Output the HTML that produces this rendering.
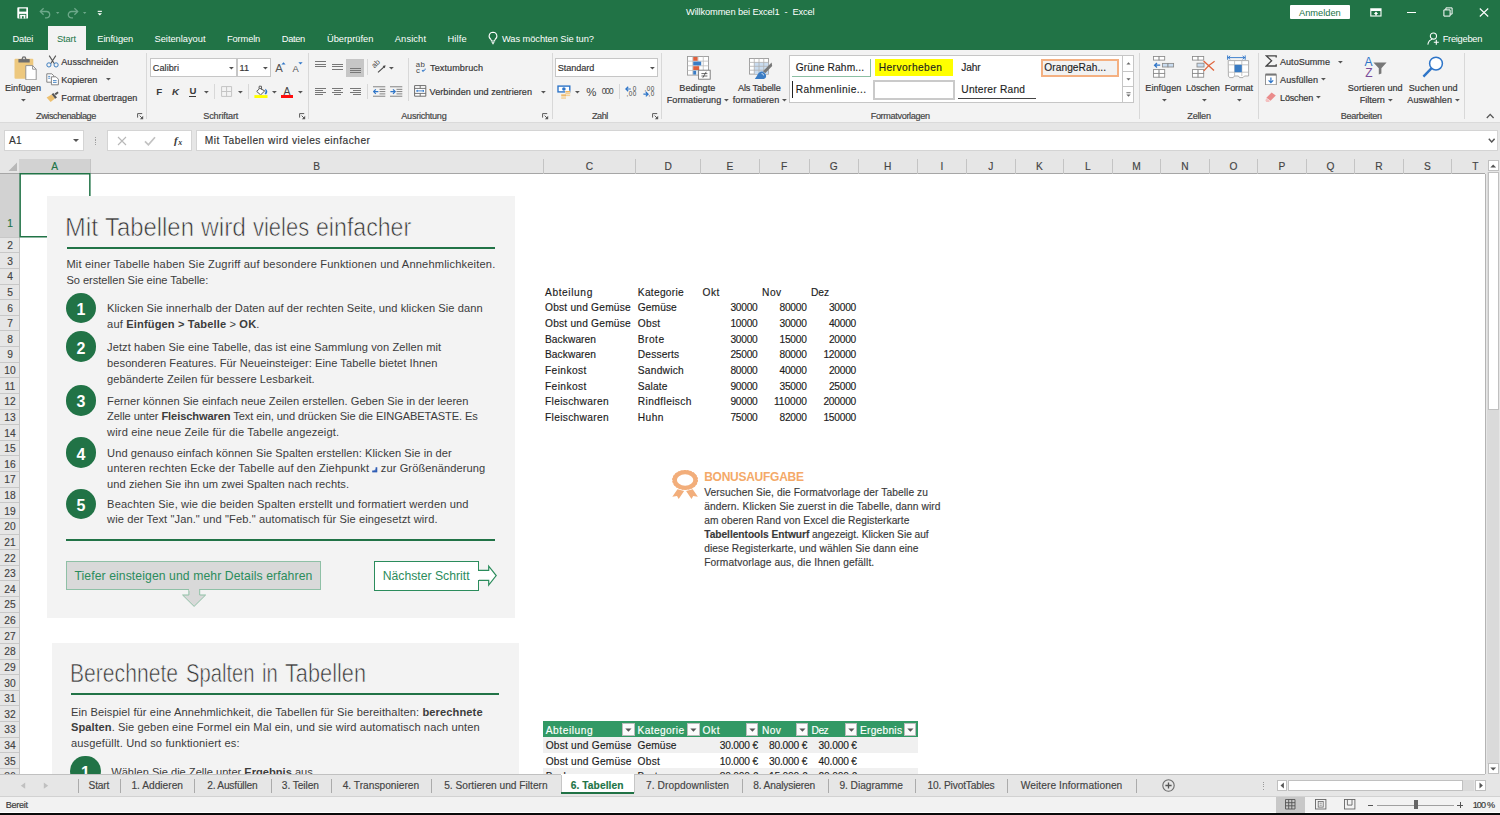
<!DOCTYPE html>
<html lang="de"><head><meta charset="utf-8"><title>Willkommen bei Excel1 - Excel</title>
<style>html,body{margin:0;padding:0}body{width:1500px;height:815px;position:relative;overflow:hidden;background:#fff;font-family:"Liberation Sans", sans-serif;}.b{position:absolute;display:block}.t{position:absolute;white-space:nowrap;line-height:1}</style></head>
<body>
<div class="b" style="left:0px;top:0px;width:1500px;height:50px;background:#217346;"></div>
<svg class="b" style="left:16.8px;top:7.3px;" width="11.6" height="11.8" viewBox="0 0 11.6 11.8"><rect x=".3" y=".3" width="11" height="11.200" rx=".8" fill="#fff"/><rect x="2.300" y="1.500" width="7" height="3.100" fill="#217346"/><rect x="2.300" y="6.900" width="7" height="4.600" fill="#217346"/><rect x="3.300" y="7.900" width="1.600" height="3.600" fill="#fff"/><rect x="6.700" y="7.900" width="1.600" height="3.600" fill="#fff"/><rect x="3.300" y="7.900" width="5" height="1.300" fill="#fff"/></svg>
<svg class="b" style="left:39px;top:7px;" width="13" height="12" viewBox="0 0 13 12"><path d="M1.5 4.5h6a3.2 3.2 0 0 1 0 6.4h-1.5" fill="none" stroke="#6da88a" stroke-width="1.3"/><path d="M4.6 1.2l-3.3 3.3 3.3 3.3" fill="none" stroke="#6da88a" stroke-width="1.3"/></svg>
<svg class="b" style="left:55px;top:10.8px;" width="5.4" height="4" viewBox="0 0 5.4 4"><path d="M1 1h3.4l-1.7 2z" fill="#6da88a"/></svg>
<svg class="b" style="left:66px;top:7px;" width="13" height="12" viewBox="0 0 13 12"><path d="M11.5 4.5h-6a3.2 3.2 0 0 0 0 6.4h1.5" fill="none" stroke="#6da88a" stroke-width="1.3"/><path d="M8.4 1.2l3.3 3.3-3.3 3.3" fill="none" stroke="#6da88a" stroke-width="1.3"/></svg>
<svg class="b" style="left:82.3px;top:10.8px;" width="5.4" height="4" viewBox="0 0 5.4 4"><path d="M1 1h3.4l-1.7 2z" fill="#6da88a"/></svg>
<svg class="b" style="left:97px;top:10px;" width="6" height="7" viewBox="0 0 6 7"><rect x=".7" y=".8" width="4.2" height="1.1" fill="#fff"/><path d="M.6 3.2h4.4l-2.2 2.4z" fill="#fff"/></svg>
<span class="t" style="left:686.00px;top:8.00px;font-size:9.3px;color:#fff;letter-spacing:-0.119px;">Willkommen bei Excel1 &nbsp;- &nbsp;Excel</span>
<div class="b" style="left:1290.4px;top:4.8px;width:59.6px;height:14.7px;background:#fff;border-radius:1px;"></div>
<span class="t" style="left:1299.00px;top:9.00px;font-size:9.3px;color:#217346;letter-spacing:-0.011px;">Anmelden</span>
<svg class="b" style="left:1369.5px;top:7.8px;" width="12" height="9" viewBox="0 0 12 9"><rect x=".8" y=".8" width="10.2" height="7.2" fill="none" stroke="#fff" stroke-width="1.1"/><rect x="1" y="1" width="10" height="2" fill="#fff"/><path d="M6 3.6l2.2 2.4h-1.4v1.6h-1.6v-1.6h-1.4z" fill="#fff"/></svg>
<div class="b" style="left:1407px;top:11.6px;width:8.6px;height:1px;background:#fff;"></div>
<svg class="b" style="left:1442.5px;top:7.2px;" width="10" height="10" viewBox="0 0 10 10"><path d="M.9 2.9h6.2v6.2h-6.2z" fill="none" stroke="#fff" stroke-width="1"/><path d="M2.9 2.9v-2h6.2v6.2h-2" fill="none" stroke="#fff" stroke-width="1"/></svg>
<svg class="b" style="left:1478.5px;top:7.8px;" width="10" height="9" viewBox="0 0 10 9"><path d="M.8 .5l8.4 8M9.2 .5l-8.4 8" stroke="#fff" stroke-width="1.1" fill="none"/></svg>
<div class="b" style="left:47.7px;top:26.3px;width:38.5px;height:24px;background:#f3f3f3;"></div>
<span class="t" style="left:12.50px;top:35.00px;font-size:9.3px;color:#fff;letter-spacing:-0.230px;">Datei</span>
<span class="t" style="left:56.90px;top:35.00px;font-size:9.3px;color:#217346;letter-spacing:-0.110px;">Start</span>
<span class="t" style="left:97.30px;top:35.00px;font-size:9.3px;color:#fff;letter-spacing:-0.115px;">Einfügen</span>
<span class="t" style="left:154.50px;top:35.00px;font-size:9.3px;color:#fff;letter-spacing:-0.016px;">Seitenlayout</span>
<span class="t" style="left:227.00px;top:35.00px;font-size:9.3px;color:#fff;letter-spacing:-0.135px;">Formeln</span>
<span class="t" style="left:281.80px;top:35.00px;font-size:9.3px;color:#fff;letter-spacing:-0.328px;">Daten</span>
<span class="t" style="left:327.00px;top:35.00px;font-size:9.3px;color:#fff;letter-spacing:-0.024px;">Überprüfen</span>
<span class="t" style="left:394.80px;top:35.00px;font-size:9.3px;color:#fff;letter-spacing:0.117px;">Ansicht</span>
<span class="t" style="left:447.50px;top:35.00px;font-size:9.3px;color:#fff;letter-spacing:0.148px;">Hilfe</span>
<span class="t" style="left:502.00px;top:35.00px;font-size:9.3px;color:#fff;letter-spacing:-0.062px;">Was möchten Sie tun?</span>
<span class="t" style="left:1442.70px;top:35.00px;font-size:9.3px;color:#fff;letter-spacing:-0.272px;">Freigeben</span>
<svg class="b" style="left:487px;top:31px;" width="12" height="14" viewBox="0 0 12 14"><path d="M6 1.2a3.9 3.9 0 0 0-2.2 7.1c.5.5.6 1 .6 1.7h3.2c0-.7.1-1.2.6-1.7a3.9 3.9 0 0 0-2.200-7.1z" fill="none" stroke="#fff" stroke-width="1.05"/><path d="M4.6 11.4h2.800M5 12.700h2" stroke="#fff" stroke-width=".9"/></svg>
<svg class="b" style="left:1426.5px;top:31.5px;" width="13" height="14" viewBox="0 0 13 14"><circle cx="6.4" cy="4" r="3.1" fill="none" stroke="#fff" stroke-width="1.05"/><path d="M.8 12.600c.6-3.200 2.500-4.900 4.600-5.300" fill="none" stroke="#fff" stroke-width="1.05"/><path d="M9.300 7.800v5M6.800 10.300h5" stroke="#fff" stroke-width="1.1"/></svg>
<div class="b" style="left:0px;top:50px;width:1500px;height:72px;background:#f3f3f3;"></div>
<div class="b" style="left:0px;top:122px;width:1500px;height:36.5px;background:#e6e6e6;"></div>
<div class="b" style="left:0px;top:121.6px;width:1500px;height:1px;background:#dadada;"></div>
<svg class="b" style="left:13.5px;top:55.5px;" width="23.5" height="24.5" viewBox="0 0 23.5 24.5"><rect x=".5" y="2.800" width="18.800" height="19.900" rx="1" fill="#edc87e"/><rect x="4.400" y="3" width="11.300" height="3.500" rx=".6" fill="#6e6e6e"/><circle cx="10" cy="2.500" r="2.300" fill="#6e6e6e"/><circle cx="10" cy="2.300" r=".9" fill="#f3f3f3"/><path d="M11.800 9.600h6.800l3.600 3.600v10.600h-10.400z" fill="#fff" stroke="#8a8a8a" stroke-width=".9"/><path d="M18.600 9.600v3.600h3.600" fill="none" stroke="#8a8a8a" stroke-width=".9"/></svg>
<span class="t" style="left:5.00px;top:84.00px;font-size:9.1px;color:#363636;letter-spacing:0.013px;-webkit-text-stroke:0.18px #363636;">Einfügen</span>
<svg class="b" style="left:20.2px;top:98.4px;" width="6.8" height="4.5" viewBox="0 0 6.8 4.5"><path d="M1 1h4.8l-2.4 2.5z" fill="#555"/></svg>
<svg class="b" style="left:46px;top:55px;" width="13" height="12.5" viewBox="0 0 13 12.5"><path d="M3.200 .6l5.200 8.200M9.800 .6l-5.200 8.200" stroke="#555" stroke-width="1.1" fill="none"/><circle cx="2.900" cy="9.900" r="2.100" fill="none" stroke="#3d7ebf" stroke-width="1"/><circle cx="10.100" cy="9.900" r="2.100" fill="none" stroke="#3d7ebf" stroke-width="1"/></svg>
<span class="t" style="left:61.30px;top:58.00px;font-size:9.1px;color:#363636;letter-spacing:-0.004px;-webkit-text-stroke:0.18px #363636;">Ausschneiden</span>
<svg class="b" style="left:45.5px;top:73px;" width="13.5" height="12.5" viewBox="0 0 13.5 12.5"><path d="M.8 .8h5l2 2v6.400h-7z" fill="#fff" stroke="#777" stroke-width=".9"/><path d="M5.400 3.800h4.600l2.400 2.400v5.600h-7z" fill="#fff" stroke="#777" stroke-width=".9"/><path d="M2.200 3.400h2M2.200 5.200h2" stroke="#3d7ebf" stroke-width=".9"/><path d="M7 7.600h3.600M7 9.400h3.600" stroke="#3d7ebf" stroke-width=".9"/></svg>
<span class="t" style="left:61.30px;top:76.00px;font-size:9.1px;color:#363636;letter-spacing:-0.058px;-webkit-text-stroke:0.18px #363636;">Kopieren</span>
<svg class="b" style="left:104.6px;top:77px;" width="6.8" height="4.5" viewBox="0 0 6.8 4.5"><path d="M1 1h4.8l-2.4 2.5z" fill="#555"/></svg>
<svg class="b" style="left:46px;top:91px;" width="13.5" height="11.5" viewBox="0 0 13.5 11.5"><path d="M.6 6.400l5-3 3.400 4.200-4.400 3.400z" fill="#edc070"/><path d="M5.600 3.200l1.800-1.200 3.600 4.600-1.800 1.200z" fill="#555"/><path d="M8.600 2.600l3-2 1 1.400-2.800 2.200z" fill="#555"/></svg>
<span class="t" style="left:61.30px;top:94.00px;font-size:9.1px;color:#363636;letter-spacing:0.043px;-webkit-text-stroke:0.18px #363636;">Format übertragen</span>
<span class="t" style="left:36.00px;top:112.00px;font-size:9.1px;color:#444;letter-spacing:-0.417px;-webkit-text-stroke:0.18px #444;">Zwischenablage</span>
<svg class="b" style="left:137.0px;top:113.2px;" width="7" height="6.5" viewBox="0 0 7 6.5"><path d="M.6 4.600V.6H5.200" fill="none" stroke="#5a5a5a" stroke-width="1"/><path d="M2.600 2.600l2.600 2.600" fill="none" stroke="#5a5a5a" stroke-width="1"/><path d="M6.200 2.800v3.400h-3.400z" fill="#5a5a5a"/></svg>
<div class="b" style="left:146.1px;top:53.3px;width:1px;height:65.4px;background:#d8d8d8;"></div>
<div class="b" style="left:150.4px;top:58.4px;width:86.3px;height:18.4px;background:#fff;border:1px solid #c6c6c6;box-sizing:border-box;"></div>
<span class="t" style="left:152.80px;top:64.00px;font-size:9.1px;color:#363636;letter-spacing:0.070px;-webkit-text-stroke:0.18px #363636;">Calibri</span>
<svg class="b" style="left:228.2px;top:65.5px;" width="6.8" height="4.5" viewBox="0 0 6.8 4.5"><path d="M1 1h4.8l-2.4 2.5z" fill="#505050"/></svg>
<div class="b" style="left:236.8px;top:58.4px;width:33.8px;height:18.4px;background:#fff;border:1px solid #c6c6c6;box-sizing:border-box;"></div>
<span class="t" style="left:239.60px;top:64.00px;font-size:9.1px;color:#363636;letter-spacing:-0.053px;-webkit-text-stroke:0.18px #363636;">11</span>
<svg class="b" style="left:261.8px;top:65.5px;" width="6.8" height="4.5" viewBox="0 0 6.8 4.5"><path d="M1 1h4.8l-2.4 2.5z" fill="#505050"/></svg>
<span class="t" style="left:275.20px;top:63.00px;font-size:11.3px;color:#555;">A</span>
<svg class="b" style="left:280.8px;top:61.6px;" width="5" height="3" viewBox="0 0 5 3"><path d="M.4 2.600l2.100-2.300 2.100 2.300z" fill="#2e75c8"/></svg>
<span class="t" style="left:292.60px;top:64.00px;font-size:9.4px;color:#555;">A</span>
<svg class="b" style="left:298.4px;top:61.8px;" width="5" height="3" viewBox="0 0 5 3"><path d="M.4 .3h4.200l-2.100 2.300z" fill="#2e75c8"/></svg>
<span class="t" style="left:156.20px;top:87.00px;font-size:9.8px;color:#3a3a3a;font-weight:bold;">F</span>
<span class="t" style="left:172.00px;top:87.00px;font-size:9.8px;color:#3a3a3a;font-weight:bold;font-style:italic;">K</span>
<span class="t" style="left:189.60px;top:86.00px;font-size:9.6px;color:#3a3a3a;font-weight:bold;">U</span>
<div class="b" style="left:189.4px;top:95.8px;width:6.8px;height:0.9px;background:#3a3a3a;"></div>
<svg class="b" style="left:203.2px;top:89.8px;" width="6.8" height="4.5" viewBox="0 0 6.8 4.5"><path d="M1 1h4.8l-2.4 2.5z" fill="#555"/></svg>
<div class="b" style="left:214.2px;top:84px;width:1px;height:15.3px;background:#d8d8d8;"></div>
<svg class="b" style="left:221px;top:86px;" width="11.5" height="11" viewBox="0 0 11.5 11"><path d="M.6 .6h10v9.800h-10zM5.600 .6v9.800M.6 5.500h10" fill="none" stroke="#c4c4c4" stroke-width="1"/></svg>
<svg class="b" style="left:237.2px;top:89.8px;" width="6.8" height="4.5" viewBox="0 0 6.8 4.5"><path d="M1 1h4.8l-2.4 2.5z" fill="#555"/></svg>
<div class="b" style="left:248.2px;top:84px;width:1px;height:15.3px;background:#d8d8d8;"></div>
<svg class="b" style="left:253.5px;top:84.5px;" width="14" height="13.5" viewBox="0 0 14 13.5"><path d="M2.700 6.400l3.200-3.100 4.800 2.600-4.100 4z" fill="#fff" stroke="#555" stroke-width="1"/><path d="M4.900 3.600l.4-2.500 2.200.2.100 3.300" fill="none" stroke="#555" stroke-width=".95"/><path d="M11 3.800c2.400 1.200 3.200 3.400 1 5.600l-1.400-.6c1.200-1.600 1.200-3 .4-5z" fill="#2e75c8"/><rect x=".4" y="10.100" width="13.100" height="3.200" fill="#ffff00"/></svg>
<svg class="b" style="left:270.5px;top:89.8px;" width="6.8" height="4.5" viewBox="0 0 6.8 4.5"><path d="M1 1h4.8l-2.4 2.5z" fill="#555"/></svg>
<span class="t" style="left:283.40px;top:87.00px;font-size:10.4px;color:#444;">A</span>
<div class="b" style="left:280.9px;top:94.6px;width:12.4px;height:3.2px;background:#ff0d0d;"></div>
<svg class="b" style="left:297.2px;top:89.8px;" width="6.8" height="4.5" viewBox="0 0 6.8 4.5"><path d="M1 1h4.8l-2.4 2.5z" fill="#555"/></svg>
<span class="t" style="left:203.30px;top:112.00px;font-size:9.1px;color:#444;letter-spacing:-0.143px;-webkit-text-stroke:0.18px #444;">Schriftart</span>
<svg class="b" style="left:299.0px;top:113.2px;" width="7" height="6.5" viewBox="0 0 7 6.5"><path d="M.6 4.600V.6H5.200" fill="none" stroke="#5a5a5a" stroke-width="1"/><path d="M2.600 2.600l2.600 2.600" fill="none" stroke="#5a5a5a" stroke-width="1"/><path d="M6.200 2.800v3.400h-3.400z" fill="#5a5a5a"/></svg>
<div class="b" style="left:308.2px;top:53.3px;width:1px;height:65.4px;background:#d8d8d8;"></div>
<div class="b" style="left:315px;top:61.3px;width:11px;height:1px;background:#777;"></div>
<div class="b" style="left:315px;top:63.6px;width:11px;height:1px;background:#777;"></div>
<div class="b" style="left:315px;top:65.9px;width:11px;height:1px;background:#777;"></div>
<div class="b" style="left:332.3px;top:64.0px;width:11px;height:1px;background:#777;"></div>
<div class="b" style="left:332.3px;top:66.3px;width:11px;height:1px;background:#777;"></div>
<div class="b" style="left:332.3px;top:68.6px;width:11px;height:1px;background:#777;"></div>
<div class="b" style="left:346.4px;top:58.7px;width:17.3px;height:18px;background:#c6c6c6;"></div>
<div class="b" style="left:349.6px;top:67.8px;width:11px;height:1px;background:#777;"></div>
<div class="b" style="left:349.6px;top:70.1px;width:11px;height:1px;background:#777;"></div>
<div class="b" style="left:349.6px;top:72.4px;width:11px;height:1px;background:#777;"></div>
<div class="b" style="left:366.8px;top:59.3px;width:1px;height:16.0px;background:#d8d8d8;"></div>
<svg class="b" style="left:372px;top:60px;" width="14.5" height="13.5" viewBox="0 0 14.5 13.5"><text x="0" y="0" font-size="7.600" font-family="Liberation Sans, sans-serif" fill="#444" transform="translate(2.400 8.600) rotate(-45)">ab</text><path d="M6 12.400l6.600-6" stroke="#444" stroke-width="1.100" fill="none"/><path d="M13.600 5.200l-3 .7 2.200 2.300z" fill="#444"/></svg>
<svg class="b" style="left:387.9px;top:65.5px;" width="6.8" height="4.5" viewBox="0 0 6.8 4.5"><path d="M1 1h4.8l-2.4 2.5z" fill="#555"/></svg>
<div class="b" style="left:408.2px;top:58px;width:1px;height:42.7px;background:#d8d8d8;"></div>
<svg class="b" style="left:415px;top:60px;" width="12" height="14" viewBox="0 0 12 14"><text x=".7" y="6.700" font-size="7.800" font-family="Liberation Sans, sans-serif" fill="#444" textLength="9.200">ab</text><text x=".9" y="12.800" font-size="7.800" font-family="Liberation Sans, sans-serif" fill="#444">c</text><path d="M10.200 8.600c0 1.600-.8 2.200-2.400 2.200" fill="none" stroke="#2e75c8" stroke-width="1"/><path d="M8.400 9.400l-1.800 1.400 1.800 1.400z" fill="#2e75c8"/></svg>
<span class="t" style="left:430.00px;top:64.00px;font-size:9.1px;color:#363636;letter-spacing:0.094px;-webkit-text-stroke:0.18px #363636;">Textumbruch</span>
<div class="b" style="left:315px;top:87.5px;width:11px;height:1px;background:#777;"></div>
<div class="b" style="left:315px;top:89.8px;width:7.5px;height:1px;background:#777;"></div>
<div class="b" style="left:315px;top:92.1px;width:11px;height:1px;background:#777;"></div>
<div class="b" style="left:315px;top:94.4px;width:7.5px;height:1px;background:#777;"></div>
<div class="b" style="left:332.3px;top:87.5px;width:11px;height:1px;background:#777;"></div>
<div class="b" style="left:334.3px;top:89.8px;width:7px;height:1px;background:#777;"></div>
<div class="b" style="left:332.3px;top:92.1px;width:11px;height:1px;background:#777;"></div>
<div class="b" style="left:334.3px;top:94.4px;width:7px;height:1px;background:#777;"></div>
<div class="b" style="left:349.6px;top:87.5px;width:11px;height:1px;background:#777;"></div>
<div class="b" style="left:353.1px;top:89.8px;width:7.5px;height:1px;background:#777;"></div>
<div class="b" style="left:349.6px;top:92.1px;width:11px;height:1px;background:#777;"></div>
<div class="b" style="left:353.1px;top:94.4px;width:7.5px;height:1px;background:#777;"></div>
<div class="b" style="left:366.8px;top:84px;width:1px;height:15.3px;background:#d8d8d8;"></div>
<svg class="b" style="left:373px;top:85.8px;" width="12.5" height="11" viewBox="0 0 12.5 11"><rect x="0" y="0.35" width="12.3" height=".9" fill="#777"/><rect x="6.5" y="2.85" width="5.800000000000001" height=".9" fill="#777"/><rect x="6.5" y="5.15" width="5.800000000000001" height=".9" fill="#777"/><rect x="6.5" y="7.45" width="5.800000000000001" height=".9" fill="#777"/><rect x="0" y="9.75" width="12.3" height=".9" fill="#777"/><path d="M5.400 5.600h-4.600M2.800 3.400l-2.200 2.200 2.200 2.200" fill="none" stroke="#2e75c8" stroke-width="1.2"/></svg>
<svg class="b" style="left:390.2px;top:85.8px;" width="12.5" height="11" viewBox="0 0 12.5 11"><rect x="0" y="0.35" width="12.3" height=".9" fill="#777"/><rect x="6.5" y="2.85" width="5.800000000000001" height=".9" fill="#777"/><rect x="6.5" y="5.15" width="5.800000000000001" height=".9" fill="#777"/><rect x="6.5" y="7.45" width="5.800000000000001" height=".9" fill="#777"/><rect x="0" y="9.75" width="12.3" height=".9" fill="#777"/><path d="M.4 5.600h4.600M3 3.400l2.200 2.200-2.200 2.200" fill="none" stroke="#2e75c8" stroke-width="1.2"/></svg>
<svg class="b" style="left:414px;top:85px;" width="12.5" height="12" viewBox="0 0 12.5 12"><path d="M.6 .6h11.200v10.600h-11.200z" fill="#fff" stroke="#666" stroke-width=".95"/><path d="M.6 3.400h11.200M.6 8.400h11.200M6.200 .6v2.800M6.200 8.400v2.800" stroke="#666" stroke-width=".9" fill="none"/><path d="M2.400 5.900h7.600" stroke="#2e75c8" stroke-width=".9"/><path d="M3.600 4.600l-1.500 1.300 1.500 1.300zM8.800 4.600l1.500 1.300-1.500 1.300z" fill="#2e75c8"/></svg>
<span class="t" style="left:429.60px;top:88.00px;font-size:9.1px;color:#363636;letter-spacing:0.034px;-webkit-text-stroke:0.18px #363636;">Verbinden und zentrieren</span>
<svg class="b" style="left:539.5px;top:89.8px;" width="6.8" height="4.5" viewBox="0 0 6.8 4.5"><path d="M1 1h4.8l-2.4 2.5z" fill="#555"/></svg>
<span class="t" style="left:401.30px;top:112.00px;font-size:9.1px;color:#444;letter-spacing:-0.263px;-webkit-text-stroke:0.18px #444;">Ausrichtung</span>
<svg class="b" style="left:542.4000000000001px;top:113.2px;" width="7" height="6.5" viewBox="0 0 7 6.5"><path d="M.6 4.600V.6H5.200" fill="none" stroke="#5a5a5a" stroke-width="1"/><path d="M2.600 2.600l2.600 2.600" fill="none" stroke="#5a5a5a" stroke-width="1"/><path d="M6.200 2.800v3.400h-3.400z" fill="#5a5a5a"/></svg>
<div class="b" style="left:551.5px;top:53.3px;width:1px;height:65.4px;background:#d8d8d8;"></div>
<div class="b" style="left:555.3px;top:58.4px;width:102.3px;height:18.4px;background:#fff;border:1px solid #c6c6c6;box-sizing:border-box;"></div>
<span class="t" style="left:557.70px;top:64.00px;font-size:9.1px;color:#363636;letter-spacing:-0.032px;-webkit-text-stroke:0.18px #363636;">Standard</span>
<svg class="b" style="left:648.8px;top:65.5px;" width="6.8" height="4.5" viewBox="0 0 6.8 4.5"><path d="M1 1h4.8l-2.4 2.5z" fill="#505050"/></svg>
<svg class="b" style="left:557px;top:84.6px;" width="14" height="14" viewBox="0 0 14 14"><rect x="1" y="1.100" width="11.800" height="5.800" fill="#fff" stroke="#2e75c8" stroke-width="1.400"/><ellipse cx="6.900" cy="4" rx="1.800" ry="1.700" fill="#2e75c8"/><rect x="8.100" y="5.700" width="5.200" height="5.600" fill="#f3f3f3"/><rect x="3.900" y="9.100" width="5.400" height="4.600" fill="#f3f3f3"/><rect x="8.400" y="6" width="4.800" height="1.500" fill="#eeb35c"/><rect x="8.400" y="8" width="4.800" height="1.300" fill="#f3cf96"/><rect x="8.400" y="9.800" width="4.800" height="1.300" fill="#f3cf96"/><rect x="4.200" y="9.400" width="4.800" height="1.500" fill="#eeb35c"/><rect x="4.200" y="11.400" width="4.800" height="1.300" fill="#f3cf96"/><rect x="4.200" y="13" width="4.800" height=".8" fill="#f3cf96"/></svg>
<svg class="b" style="left:573.7px;top:89.9px;" width="6.8" height="4.5" viewBox="0 0 6.8 4.5"><path d="M1 1h4.8l-2.4 2.5z" fill="#555"/></svg>
<span class="t" style="left:586.20px;top:87.00px;font-size:11.4px;color:#444;">%</span>
<span class="t" style="left:601.80px;top:87.00px;font-size:8.3px;color:#444;letter-spacing:-1.072px;">000</span>
<div class="b" style="left:619.1px;top:84px;width:1px;height:15.3px;background:#d8d8d8;"></div>
<svg class="b" style="left:625px;top:85.7px;" width="13" height="12.5" viewBox="0 0 13 12.5"><path d="M5.800 3h-4.600M3.200 .8l-2.300 2.200 2.300 2.200" fill="none" stroke="#2e75c8" stroke-width="1.200"/><text x="7.700" y="4.600" font-size="6.400" font-family="Liberation Sans, sans-serif" fill="#444">0</text><text x="1.400" y="10.200" font-size="6.400" font-family="Liberation Sans, sans-serif" fill="#444" textLength="10">,00</text></svg>
<svg class="b" style="left:642.8px;top:85.7px;" width="13" height="12.5" viewBox="0 0 13 12.5"><text x="1.400" y="4.600" font-size="6.400" font-family="Liberation Sans, sans-serif" fill="#444" textLength="10">,00</text><path d="M.4 8.200h4.600M2.800 6l2.300 2.200-2.300 2.200" fill="none" stroke="#2e75c8" stroke-width="1.200"/><text x="5.400" y="10.200" font-size="6.400" font-family="Liberation Sans, sans-serif" fill="#444" textLength="6">,0</text></svg>
<span class="t" style="left:592.00px;top:112.00px;font-size:9.1px;color:#444;letter-spacing:-0.468px;-webkit-text-stroke:0.18px #444;">Zahl</span>
<svg class="b" style="left:651.7px;top:113.2px;" width="7" height="6.5" viewBox="0 0 7 6.5"><path d="M.6 4.600V.6H5.200" fill="none" stroke="#5a5a5a" stroke-width="1"/><path d="M2.600 2.600l2.600 2.600" fill="none" stroke="#5a5a5a" stroke-width="1"/><path d="M6.200 2.800v3.400h-3.400z" fill="#5a5a5a"/></svg>
<div class="b" style="left:660.8px;top:53.3px;width:1px;height:65.4px;background:#d8d8d8;"></div>
<svg class="b" style="left:686.5px;top:55.8px;" width="24" height="24" viewBox="0 0 24 24"><rect x=".5" y=".5" width="21" height="18.600" fill="#fff" stroke="#9a9a9a" stroke-width=".9"/><path d="M5.75 .5v18.600" stroke="#bdbdbd" stroke-width=".8"/><path d="M11.00 .5v18.600" stroke="#bdbdbd" stroke-width=".8"/><path d="M16.25 .5v18.600" stroke="#bdbdbd" stroke-width=".8"/><path d="M.5 5.15h21" stroke="#bdbdbd" stroke-width=".8"/><path d="M.5 9.80h21" stroke="#bdbdbd" stroke-width=".8"/><path d="M.5 14.45h21" stroke="#bdbdbd" stroke-width=".8"/><rect x="6.200" y="1" width="4.400" height="3.800" fill="#e0603c"/><rect x="6.200" y="5.600" width="8" height="3.800" fill="#3a7cc4"/><rect x="6.200" y="10.200" width="6" height="3.800" fill="#e0603c"/><rect x="6.200" y="14.800" width="3" height="3.800" fill="#3a7cc4"/><rect x="11.600" y="14.200" width="11.600" height="9" fill="#fff" stroke="#777" stroke-width=".9"/><path d="M14.400 17.600h6M14.400 20h6M19.200 15.800l-3.400 6" stroke="#444" stroke-width=".8" fill="none"/></svg>
<span class="t" style="left:679.30px;top:84.00px;font-size:9.1px;color:#363636;letter-spacing:0.013px;-webkit-text-stroke:0.18px #363636;">Bedingte</span>
<span class="t" style="left:666.70px;top:96.00px;font-size:9.1px;color:#363636;letter-spacing:0.046px;-webkit-text-stroke:0.18px #363636;">Formatierung</span>
<svg class="b" style="left:723.2px;top:98.4px;" width="6.8" height="4.5" viewBox="0 0 6.8 4.5"><path d="M1 1h4.8l-2.4 2.5z" fill="#555"/></svg>
<svg class="b" style="left:749px;top:58px;" width="24" height="22" viewBox="0 0 24 22"><rect x=".5" y=".5" width="19" height="15.600" fill="#fff" stroke="#9a9a9a" stroke-width=".9"/><rect x="5.250" y="4.400" width="14" height="11.600" fill="#c9dcf0"/><path d="M5.25 .5v15.600" stroke="#b0b0b0" stroke-width=".8"/><path d="M10.00 .5v15.600" stroke="#b0b0b0" stroke-width=".8"/><path d="M14.75 .5v15.600" stroke="#b0b0b0" stroke-width=".8"/><path d="M.5 4.40h19" stroke="#b0b0b0" stroke-width=".8"/><path d="M.5 8.30h19" stroke="#b0b0b0" stroke-width=".8"/><path d="M.5 12.20h19" stroke="#b0b0b0" stroke-width=".8"/><path d="M22.600 4.400l.600 3.600-7 7.200-2.200-2z" fill="#777"/><path d="M13.600 13.600c-2.600-.4-4.400 1.400-5.600 4.200l-2.200 3.200h9c2.200-.6 3.400-3.400 1.200-5.600z" fill="#3a7cc4"/><path d="M12.600 15.600c1.200 0 2 .8 2 1.800" stroke="#fff" stroke-width=".8" fill="none"/></svg>
<span class="t" style="left:738.00px;top:84.00px;font-size:9.1px;color:#363636;letter-spacing:-0.111px;-webkit-text-stroke:0.18px #363636;">Als Tabelle</span>
<span class="t" style="left:732.70px;top:96.00px;font-size:9.1px;color:#363636;letter-spacing:0.060px;-webkit-text-stroke:0.18px #363636;">formatieren</span>
<svg class="b" style="left:781.2px;top:98.4px;" width="6.8" height="4.5" viewBox="0 0 6.8 4.5"><path d="M1 1h4.8l-2.4 2.5z" fill="#555"/></svg>
<div class="b" style="left:789px;top:55px;width:344.6px;height:47.7px;background:#fff;border:1px solid #c6c6c6;box-sizing:border-box;"></div>
<span class="t" style="left:795.70px;top:63.00px;font-size:10.2px;color:#1f1f1f;letter-spacing:0.124px;-webkit-text-stroke:0.15px #1f1f1f;">Grüne Rahm...</span>
<div class="b" style="left:792.3px;top:76px;width:78.8px;height:1px;background:#8cbfa3;"></div>
<div class="b" style="left:870.2px;top:59.3px;width:1px;height:17.7px;background:#8cbfa3;"></div>
<div class="b" style="left:875px;top:59.3px;width:78.3px;height:17.2px;background:#ffff00;"></div>
<span class="t" style="left:878.70px;top:63.00px;font-size:10.2px;color:#1f1f1f;letter-spacing:0.439px;-webkit-text-stroke:0.15px #1f1f1f;">Hervorheben</span>
<span class="t" style="left:961.30px;top:63.00px;font-size:10.2px;color:#1f1f1f;letter-spacing:-0.143px;-webkit-text-stroke:0.15px #1f1f1f;">Jahr</span>
<div class="b" style="left:1040.8px;top:59px;width:78.4px;height:17.7px;background:#f2f2f2;border:2px solid #f4b081;box-sizing:border-box;"></div>
<span class="t" style="left:1044.30px;top:63.00px;font-size:10.2px;color:#1f1f1f;letter-spacing:0.048px;-webkit-text-stroke:0.15px #1f1f1f;">OrangeRah...</span>
<div class="b" style="left:792px;top:81.3px;width:1.1px;height:17.1px;background:#222;"></div>
<span class="t" style="left:795.70px;top:85.00px;font-size:10.2px;color:#1f1f1f;letter-spacing:0.398px;-webkit-text-stroke:0.15px #1f1f1f;">Rahmenlinie...</span>
<div class="b" style="left:873.3px;top:79.6px;width:81.7px;height:20.8px;background:#fff;border:2px solid #cacaca;box-sizing:border-box;"></div>
<span class="t" style="left:961.30px;top:85.00px;font-size:10.2px;color:#1f1f1f;letter-spacing:0.231px;-webkit-text-stroke:0.15px #1f1f1f;">Unterer Rand</span>
<div class="b" style="left:958px;top:97.5px;width:78px;height:1.1px;background:#444;"></div>
<div class="b" style="left:1122.4px;top:55px;width:11.2px;height:47.7px;background:#fff;border:1px solid #c6c6c6;box-sizing:border-box;"></div>
<div class="b" style="left:1122.4px;top:70.6px;width:11.2px;height:1px;background:#c6c6c6;"></div>
<div class="b" style="left:1122.4px;top:86px;width:11.2px;height:1px;background:#c6c6c6;"></div>
<svg class="b" style="left:1125.5px;top:61.5px;" width="5" height="3" viewBox="0 0 5 3"><path d="M.4 2.600l2.100-2.300 2.100 2.300z" fill="#666"/></svg>
<svg class="b" style="left:1125.5px;top:77.6px;" width="5" height="3" viewBox="0 0 5 3"><path d="M.4 .3h4.200l-2.100 2.300z" fill="#666"/></svg>
<svg class="b" style="left:1125.5px;top:91.5px;" width="5" height="5.5" viewBox="0 0 5 5.5"><rect x=".4" y=".3" width="4.200" height=".9" fill="#666"/><path d="M.4 2.400h4.200l-2.100 2.300z" fill="#666"/></svg>
<span class="t" style="left:870.70px;top:112.00px;font-size:9.1px;color:#444;letter-spacing:-0.338px;-webkit-text-stroke:0.18px #444;">Formatvorlagen</span>
<div class="b" style="left:1139.2px;top:53.3px;width:1px;height:65.4px;background:#d8d8d8;"></div>
<svg class="b" style="left:1153px;top:55.8px;" width="22" height="22" viewBox="0 0 22 22"><rect x="0.5" y="0.5" width="5.6" height="3.6" fill="#fff" stroke="#8a8a8a" stroke-width=".85"/><rect x="6.1" y="0.5" width="5.6" height="3.6" fill="#fff" stroke="#8a8a8a" stroke-width=".85"/><rect x="9.4" y="7.4" width="5.6" height="3.6" fill="#c9dcf0" stroke="#8a8a8a" stroke-width=".85"/><rect x="15" y="7.4" width="5.6" height="3.6" fill="#c9dcf0" stroke="#8a8a8a" stroke-width=".85"/><path d="M7.200 9.200h-5.400M4 7l-2.400 2.200 2.400 2.200" fill="none" stroke="#2e75c8" stroke-width="1.300"/><rect x="0.5" y="13.6" width="5.6" height="3.8" fill="#fff" stroke="#8a8a8a" stroke-width=".85"/><rect x="6.1" y="13.6" width="5.6" height="3.8" fill="#fff" stroke="#8a8a8a" stroke-width=".85"/><rect x="0.5" y="17.4" width="5.6" height="3.8" fill="#fff" stroke="#8a8a8a" stroke-width=".85"/><rect x="6.1" y="17.4" width="5.6" height="3.8" fill="#fff" stroke="#8a8a8a" stroke-width=".85"/></svg>
<span class="t" style="left:1145.30px;top:84.00px;font-size:9.1px;color:#363636;letter-spacing:0.013px;-webkit-text-stroke:0.18px #363636;">Einfügen</span>
<svg class="b" style="left:1160.5px;top:98.4px;" width="6.8" height="4.5" viewBox="0 0 6.8 4.5"><path d="M1 1h4.8l-2.4 2.5z" fill="#555"/></svg>
<svg class="b" style="left:1191.8px;top:55.8px;" width="24" height="22" viewBox="0 0 24 22"><rect x="0.5" y="0.5" width="5.6" height="3.6" fill="#fff" stroke="#8a8a8a" stroke-width=".85"/><rect x="6.1" y="0.5" width="5.6" height="3.6" fill="#fff" stroke="#8a8a8a" stroke-width=".85"/><rect x="5" y="7.2" width="7" height="3.8" fill="#c9dcf0" stroke="#8a8a8a" stroke-width=".85"/><rect x="0.5" y="13.6" width="5.6" height="3.8" fill="#fff" stroke="#8a8a8a" stroke-width=".85"/><rect x="6.1" y="13.6" width="5.6" height="3.8" fill="#fff" stroke="#8a8a8a" stroke-width=".85"/><rect x="0.5" y="17.4" width="5.6" height="3.8" fill="#fff" stroke="#8a8a8a" stroke-width=".85"/><rect x="6.1" y="17.4" width="5.6" height="3.8" fill="#fff" stroke="#8a8a8a" stroke-width=".85"/><path d="M11.600 5l10.400 9.600M22.600 5.200c-4 2.400-7.600 5.600-10.800 9.600" stroke="#e0643c" stroke-width="1.300" fill="none"/></svg>
<span class="t" style="left:1186.00px;top:84.00px;font-size:9.1px;color:#363636;letter-spacing:-0.115px;-webkit-text-stroke:0.18px #363636;">Löschen</span>
<svg class="b" style="left:1200.5px;top:98.4px;" width="6.8" height="4.5" viewBox="0 0 6.8 4.5"><path d="M1 1h4.8l-2.4 2.5z" fill="#555"/></svg>
<svg class="b" style="left:1227px;top:55px;" width="23" height="25" viewBox="0 0 23 25"><path d="M.6 2.600h17.600" stroke="#2e75c8" stroke-width=".9"/><path d="M.6 .4v4.400M18.200 .4v4.400" stroke="#2e75c8" stroke-width=".9"/><path d="M3.200 .9l-2 1.700 2 1.700M15.600 .9l2 1.700-2 1.700" fill="none" stroke="#2e75c8" stroke-width=".9"/><path d="M1.200 5.600h20.400v15.400h-4.200l-1.400 1.600h-3.400l-1.200-1.600h-4l-1.200 1.600h-3.600l-1.200-1.600z" fill="#fff" stroke="#a0a0a0" stroke-width=".85"/><path d="M7.600 5.600v15.400M14.800 5.600v15.400M1.200 9.800h20.400M1.200 17.200h20.400" stroke="#b8b8b8" stroke-width=".8"/><rect x="7.600" y="9.800" width="7.200" height="7.400" fill="#3a7cc4"/></svg>
<span class="t" style="left:1224.70px;top:84.00px;font-size:9.1px;color:#363636;letter-spacing:-0.102px;-webkit-text-stroke:0.18px #363636;">Format</span>
<svg class="b" style="left:1235.5px;top:98.4px;" width="6.8" height="4.5" viewBox="0 0 6.8 4.5"><path d="M1 1h4.8l-2.4 2.5z" fill="#555"/></svg>
<span class="t" style="left:1187.30px;top:112.00px;font-size:9.1px;color:#444;letter-spacing:-0.216px;-webkit-text-stroke:0.18px #444;">Zellen</span>
<div class="b" style="left:1258.2px;top:53.3px;width:1px;height:65.4px;background:#d8d8d8;"></div>
<svg class="b" style="left:1264.5px;top:54.8px;" width="12.5" height="12" viewBox="0 0 12.5 12"><path d="M11.200 2.600v-1.800h-10l5.400 5-5.400 5.200h10v-1.800" fill="none" stroke="#444" stroke-width="1.300"/></svg>
<span class="t" style="left:1280.00px;top:58.00px;font-size:9.1px;color:#363636;letter-spacing:-0.006px;-webkit-text-stroke:0.18px #363636;">AutoSumme</span>
<svg class="b" style="left:1337.2px;top:59.5px;" width="6.8" height="4.5" viewBox="0 0 6.8 4.5"><path d="M1 1h4.8l-2.4 2.5z" fill="#555"/></svg>
<svg class="b" style="left:1264.8px;top:72.8px;" width="12" height="12.5" viewBox="0 0 12 12.5"><rect x=".5" y="1.800" width="10.800" height="10" fill="#fff" stroke="#888" stroke-width=".9"/><rect x=".5" y=".5" width="10.800" height="2" fill="#777"/><path d="M5.900 4.400v5M3.600 7.400l2.300 2.300 2.300-2.300" fill="none" stroke="#2e75c8" stroke-width="1.200"/></svg>
<span class="t" style="left:1280.00px;top:76.00px;font-size:9.1px;color:#363636;letter-spacing:0.072px;-webkit-text-stroke:0.18px #363636;">Ausfüllen</span>
<svg class="b" style="left:1320.2px;top:77.2px;" width="6.8" height="4.5" viewBox="0 0 6.8 4.5"><path d="M1 1h4.8l-2.4 2.5z" fill="#555"/></svg>
<svg class="b" style="left:1265px;top:91.5px;" width="11.5" height="10.5" viewBox="0 0 11.5 10.5"><path d="M6.600 .6l4.200 3-5.200 5.200-4.200-3z" fill="#ea8c8c"/><path d="M1.200 6.200l3.800 2.800-1.200 1.200h-2.400l-1-1.600z" fill="#f4c0c0"/></svg>
<span class="t" style="left:1280.00px;top:94.00px;font-size:9.1px;color:#363636;letter-spacing:-0.182px;-webkit-text-stroke:0.18px #363636;">Löschen</span>
<svg class="b" style="left:1315.2px;top:94.9px;" width="6.8" height="4.5" viewBox="0 0 6.8 4.5"><path d="M1 1h4.8l-2.4 2.5z" fill="#555"/></svg>
<span class="t" style="left:1364.40px;top:56.00px;font-size:12px;color:#2e75c8;">A</span>
<span class="t" style="left:1365.20px;top:67.00px;font-size:12px;color:#7a4c9a;">Z</span>
<svg class="b" style="left:1373px;top:62px;" width="14" height="13" viewBox="0 0 14 13"><path d="M.4 .6h13.200l-5.200 5.600v5.200l-2.600 1v-6.200z" fill="#777"/></svg>
<span class="t" style="left:1347.70px;top:84.00px;font-size:9.1px;color:#363636;letter-spacing:0.033px;-webkit-text-stroke:0.18px #363636;">Sortieren und</span>
<span class="t" style="left:1359.70px;top:96.00px;font-size:9.1px;color:#363636;letter-spacing:-0.044px;-webkit-text-stroke:0.18px #363636;">Filtern</span>
<svg class="b" style="left:1386.5px;top:98.4px;" width="6.8" height="4.5" viewBox="0 0 6.8 4.5"><path d="M1 1h4.8l-2.4 2.5z" fill="#555"/></svg>
<svg class="b" style="left:1421.5px;top:55.5px;" width="22" height="22" viewBox="0 0 22 22"><circle cx="14" cy="7.600" r="6.400" fill="#fff" stroke="#2e75c8" stroke-width="1.500"/><path d="M9.400 12.400l-8 8.200" stroke="#2e75c8" stroke-width="2.400" fill="none"/></svg>
<span class="t" style="left:1408.70px;top:84.00px;font-size:9.1px;color:#363636;letter-spacing:0.039px;-webkit-text-stroke:0.18px #363636;">Suchen und</span>
<span class="t" style="left:1407.30px;top:96.00px;font-size:9.1px;color:#363636;letter-spacing:0.025px;-webkit-text-stroke:0.18px #363636;">Auswählen</span>
<svg class="b" style="left:1453.9px;top:98.4px;" width="6.8" height="4.5" viewBox="0 0 6.8 4.5"><path d="M1 1h4.8l-2.4 2.5z" fill="#555"/></svg>
<span class="t" style="left:1340.70px;top:112.00px;font-size:9.1px;color:#444;letter-spacing:-0.300px;-webkit-text-stroke:0.18px #444;">Bearbeiten</span>
<div class="b" style="left:1464.2px;top:53.3px;width:1px;height:65.4px;background:#d8d8d8;"></div>
<svg class="b" style="left:1486px;top:113px;" width="8.5" height="6" viewBox="0 0 8.5 6"><path d="M.8 5l3.400-3.600 3.400 3.600" fill="none" stroke="#555" stroke-width="1.300"/></svg>
<div class="b" style="left:4px;top:130px;width:79.5px;height:21px;background:#fff;border:1px solid #d4d4d4;box-sizing:border-box;"></div>
<span class="t" style="left:9.10px;top:136.00px;font-size:10.2px;color:#333;-webkit-text-stroke:0.15px #333;">A1</span>
<svg class="b" style="left:71.6px;top:138.2px;" width="8" height="5" viewBox="0 0 8 5"><path d="M1 1h6l-3.0 3z" fill="#555"/></svg>
<div class="b" style="left:94.9px;top:137.0px;width:1.3px;height:1.3px;background:#a0a0a0;"></div>
<div class="b" style="left:94.9px;top:139.4px;width:1.3px;height:1.3px;background:#a0a0a0;"></div>
<div class="b" style="left:94.9px;top:141.8px;width:1.3px;height:1.3px;background:#a0a0a0;"></div>
<div class="b" style="left:94.9px;top:144.2px;width:1.3px;height:1.3px;background:#a0a0a0;"></div>
<div class="b" style="left:107.2px;top:130px;width:85.3px;height:21px;background:#fff;border:1px solid #d4d4d4;box-sizing:border-box;"></div>
<svg class="b" style="left:117px;top:135.5px;" width="10" height="10" viewBox="0 0 10 10"><path d="M1 1l8 8M9 1l-8 8" stroke="#b8b8b8" stroke-width="1.100" fill="none"/></svg>
<svg class="b" style="left:144px;top:135.5px;" width="12" height="10" viewBox="0 0 12 10"><path d="M1 5.400l3.400 3.400 6.600-7.600" stroke="#c2c2c2" stroke-width="1.700" fill="none"/></svg>
<span class="t" style="left:174.00px;top:135.00px;font-size:11px;color:#3a3a3a;font-weight:bold;font-style:italic;font-family:'Liberation Serif', serif;">f</span>
<span class="t" style="left:178.30px;top:139.00px;font-size:8px;color:#3a3a3a;font-weight:bold;font-style:italic;font-family:'Liberation Serif', serif;">x</span>
<div class="b" style="left:195.5px;top:130px;width:1302px;height:21px;background:#fff;border:1px solid #d4d4d4;box-sizing:border-box;"></div>
<span class="t" style="left:204.80px;top:136.00px;font-size:10.2px;color:#333;letter-spacing:0.481px;-webkit-text-stroke:0.15px #333;">Mit Tabellen wird vieles einfacher</span>
<svg class="b" style="left:1487.5px;top:137.5px;" width="7.5" height="5.5" viewBox="0 0 7.5 5.5"><path d="M.8 .8l2.900 3.200 2.900-3.200" fill="none" stroke="#555" stroke-width="1.400"/></svg>
<div class="b" style="left:0px;top:158.6px;width:1485px;height:15px;background:#e6e6e6;"></div>
<div class="b" style="left:0px;top:173.2px;width:1485px;height:1px;background:#a6a6a6;"></div>
<svg class="b" style="left:8px;top:161.8px;" width="9.5" height="9.5" viewBox="0 0 9.5 9.5"><path d="M9 .5v8.500h-8.500z" fill="#b8b8b8"/></svg>
<div class="b" style="left:19.3px;top:158.6px;width:70.8px;height:14.7px;background:#d2d2d2;"></div>
<div class="b" style="left:89.7px;top:159.3px;width:1px;height:14.3px;background:#c4c4c4;"></div>
<div class="b" style="left:542.8px;top:159.3px;width:1px;height:14.3px;background:#c4c4c4;"></div>
<div class="b" style="left:635.1px;top:159.3px;width:1px;height:14.3px;background:#c4c4c4;"></div>
<div class="b" style="left:700.1px;top:159.3px;width:1px;height:14.3px;background:#c4c4c4;"></div>
<div class="b" style="left:758.7px;top:159.3px;width:1px;height:14.3px;background:#c4c4c4;"></div>
<div class="b" style="left:808.5px;top:159.3px;width:1px;height:14.3px;background:#c4c4c4;"></div>
<div class="b" style="left:857.8px;top:159.3px;width:1px;height:14.3px;background:#c4c4c4;"></div>
<div class="b" style="left:916.8px;top:159.3px;width:1px;height:14.3px;background:#c4c4c4;"></div>
<div class="b" style="left:966.1px;top:159.3px;width:1px;height:14.3px;background:#c4c4c4;"></div>
<div class="b" style="left:1014.5px;top:159.3px;width:1px;height:14.3px;background:#c4c4c4;"></div>
<div class="b" style="left:1063.1px;top:159.3px;width:1px;height:14.3px;background:#c4c4c4;"></div>
<div class="b" style="left:1111.7px;top:159.3px;width:1px;height:14.3px;background:#c4c4c4;"></div>
<div class="b" style="left:1160.2px;top:159.3px;width:1px;height:14.3px;background:#c4c4c4;"></div>
<div class="b" style="left:1208.7px;top:159.3px;width:1px;height:14.3px;background:#c4c4c4;"></div>
<div class="b" style="left:1257.2px;top:159.3px;width:1px;height:14.3px;background:#c4c4c4;"></div>
<div class="b" style="left:1305.7px;top:159.3px;width:1px;height:14.3px;background:#c4c4c4;"></div>
<div class="b" style="left:1354.2px;top:159.3px;width:1px;height:14.3px;background:#c4c4c4;"></div>
<div class="b" style="left:1402.7px;top:159.3px;width:1px;height:14.3px;background:#c4c4c4;"></div>
<div class="b" style="left:1451.1px;top:159.3px;width:1px;height:14.3px;background:#c4c4c4;"></div>
<span class="t" style="left:51.35px;top:162.00px;font-size:10.2px;color:#217346;-webkit-text-stroke:0.15px #217346;">A</span>
<span class="t" style="left:313.35px;top:162.00px;font-size:10.2px;color:#444;-webkit-text-stroke:0.15px #444;">B</span>
<span class="t" style="left:585.77px;top:162.00px;font-size:10.2px;color:#444;-webkit-text-stroke:0.15px #444;">C</span>
<span class="t" style="left:664.42px;top:162.00px;font-size:10.2px;color:#444;-webkit-text-stroke:0.15px #444;">D</span>
<span class="t" style="left:726.50px;top:162.00px;font-size:10.2px;color:#444;-webkit-text-stroke:0.15px #444;">E</span>
<span class="t" style="left:780.98px;top:162.00px;font-size:10.2px;color:#444;-webkit-text-stroke:0.15px #444;">F</span>
<span class="t" style="left:829.68px;top:162.00px;font-size:10.2px;color:#444;-webkit-text-stroke:0.15px #444;">G</span>
<span class="t" style="left:884.12px;top:162.00px;font-size:10.2px;color:#444;-webkit-text-stroke:0.15px #444;">H</span>
<span class="t" style="left:940.53px;top:162.00px;font-size:10.2px;color:#444;-webkit-text-stroke:0.15px #444;">I</span>
<span class="t" style="left:988.25px;top:162.00px;font-size:10.2px;color:#444;-webkit-text-stroke:0.15px #444;">J</span>
<span class="t" style="left:1035.90px;top:162.00px;font-size:10.2px;color:#444;-webkit-text-stroke:0.15px #444;">K</span>
<span class="t" style="left:1085.06px;top:162.00px;font-size:10.2px;color:#444;-webkit-text-stroke:0.15px #444;">L</span>
<span class="t" style="left:1132.20px;top:162.00px;font-size:10.2px;color:#444;-webkit-text-stroke:0.15px #444;">M</span>
<span class="t" style="left:1181.27px;top:162.00px;font-size:10.2px;color:#444;-webkit-text-stroke:0.15px #444;">N</span>
<span class="t" style="left:1229.48px;top:162.00px;font-size:10.2px;color:#444;-webkit-text-stroke:0.15px #444;">O</span>
<span class="t" style="left:1278.55px;top:162.00px;font-size:10.2px;color:#444;-webkit-text-stroke:0.15px #444;">P</span>
<span class="t" style="left:1326.48px;top:162.00px;font-size:10.2px;color:#444;-webkit-text-stroke:0.15px #444;">Q</span>
<span class="t" style="left:1375.27px;top:162.00px;font-size:10.2px;color:#444;-webkit-text-stroke:0.15px #444;">R</span>
<span class="t" style="left:1424.00px;top:162.00px;font-size:10.2px;color:#444;-webkit-text-stroke:0.15px #444;">S</span>
<span class="t" style="left:1472.18px;top:162.00px;font-size:10.2px;color:#444;-webkit-text-stroke:0.15px #444;">T</span>
<div class="b" style="left:0px;top:174px;width:19.6px;height:600.5px;background:#e6e6e6;"></div>
<div class="b" style="left:19px;top:174px;width:1px;height:600.5px;background:#c4c4c4;"></div>
<div class="b" style="left:0px;top:174px;width:19.6px;height:63.19999999999999px;background:#d2d2d2;"></div>
<span class="t" style="left:7.16px;top:219.00px;font-size:10.2px;color:#217346;-webkit-text-stroke:0.15px #217346;">1</span>
<div class="b" style="left:0px;top:236.7px;width:19px;height:1px;background:#c8c8c8;"></div>
<span class="t" style="left:7.16px;top:241.00px;font-size:10.2px;color:#444;-webkit-text-stroke:0.15px #444;">2</span>
<div class="b" style="left:0px;top:252.32px;width:19px;height:1px;background:#c8c8c8;"></div>
<span class="t" style="left:7.16px;top:257.00px;font-size:10.2px;color:#444;-webkit-text-stroke:0.15px #444;">3</span>
<div class="b" style="left:0px;top:267.95px;width:19px;height:1px;background:#c8c8c8;"></div>
<span class="t" style="left:7.16px;top:272.00px;font-size:10.2px;color:#444;-webkit-text-stroke:0.15px #444;">4</span>
<div class="b" style="left:0px;top:283.57px;width:19px;height:1px;background:#c8c8c8;"></div>
<span class="t" style="left:7.16px;top:288.00px;font-size:10.2px;color:#444;-webkit-text-stroke:0.15px #444;">5</span>
<div class="b" style="left:0px;top:299.2px;width:19px;height:1px;background:#c8c8c8;"></div>
<span class="t" style="left:7.16px;top:304.00px;font-size:10.2px;color:#444;-webkit-text-stroke:0.15px #444;">6</span>
<div class="b" style="left:0px;top:314.82px;width:19px;height:1px;background:#c8c8c8;"></div>
<span class="t" style="left:7.16px;top:319.00px;font-size:10.2px;color:#444;-webkit-text-stroke:0.15px #444;">7</span>
<div class="b" style="left:0px;top:330.45px;width:19px;height:1px;background:#c8c8c8;"></div>
<span class="t" style="left:7.16px;top:335.00px;font-size:10.2px;color:#444;-webkit-text-stroke:0.15px #444;">8</span>
<div class="b" style="left:0px;top:346.07px;width:19px;height:1px;background:#c8c8c8;"></div>
<span class="t" style="left:7.16px;top:350.00px;font-size:10.2px;color:#444;-webkit-text-stroke:0.15px #444;">9</span>
<div class="b" style="left:0px;top:361.7px;width:19px;height:1px;background:#c8c8c8;"></div>
<span class="t" style="left:4.33px;top:366.00px;font-size:10.2px;color:#444;-webkit-text-stroke:0.15px #444;">10</span>
<div class="b" style="left:0px;top:377.32px;width:19px;height:1px;background:#c8c8c8;"></div>
<span class="t" style="left:4.71px;top:382.00px;font-size:10.2px;color:#444;-webkit-text-stroke:0.15px #444;">11</span>
<div class="b" style="left:0px;top:392.95px;width:19px;height:1px;background:#c8c8c8;"></div>
<span class="t" style="left:4.33px;top:397.00px;font-size:10.2px;color:#444;-webkit-text-stroke:0.15px #444;">12</span>
<div class="b" style="left:0px;top:408.57px;width:19px;height:1px;background:#c8c8c8;"></div>
<span class="t" style="left:4.33px;top:413.00px;font-size:10.2px;color:#444;-webkit-text-stroke:0.15px #444;">13</span>
<div class="b" style="left:0px;top:424.2px;width:19px;height:1px;background:#c8c8c8;"></div>
<span class="t" style="left:4.33px;top:429.00px;font-size:10.2px;color:#444;-webkit-text-stroke:0.15px #444;">14</span>
<div class="b" style="left:0px;top:439.82px;width:19px;height:1px;background:#c8c8c8;"></div>
<span class="t" style="left:4.33px;top:444.00px;font-size:10.2px;color:#444;-webkit-text-stroke:0.15px #444;">15</span>
<div class="b" style="left:0px;top:455.45px;width:19px;height:1px;background:#c8c8c8;"></div>
<span class="t" style="left:4.33px;top:460.00px;font-size:10.2px;color:#444;-webkit-text-stroke:0.15px #444;">16</span>
<div class="b" style="left:0px;top:471.07px;width:19px;height:1px;background:#c8c8c8;"></div>
<span class="t" style="left:4.33px;top:475.00px;font-size:10.2px;color:#444;-webkit-text-stroke:0.15px #444;">17</span>
<div class="b" style="left:0px;top:486.7px;width:19px;height:1px;background:#c8c8c8;"></div>
<span class="t" style="left:4.33px;top:491.00px;font-size:10.2px;color:#444;-webkit-text-stroke:0.15px #444;">18</span>
<div class="b" style="left:0px;top:502.32px;width:19px;height:1px;background:#c8c8c8;"></div>
<span class="t" style="left:4.33px;top:507.00px;font-size:10.2px;color:#444;-webkit-text-stroke:0.15px #444;">19</span>
<div class="b" style="left:0px;top:517.95px;width:19px;height:1px;background:#c8c8c8;"></div>
<span class="t" style="left:4.33px;top:522.00px;font-size:10.2px;color:#444;-webkit-text-stroke:0.15px #444;">20</span>
<div class="b" style="left:0px;top:533.58px;width:19px;height:1px;background:#c8c8c8;"></div>
<span class="t" style="left:4.33px;top:538.00px;font-size:10.2px;color:#444;-webkit-text-stroke:0.15px #444;">21</span>
<div class="b" style="left:0px;top:549.2px;width:19px;height:1px;background:#c8c8c8;"></div>
<span class="t" style="left:4.33px;top:554.00px;font-size:10.2px;color:#444;-webkit-text-stroke:0.15px #444;">22</span>
<div class="b" style="left:0px;top:564.83px;width:19px;height:1px;background:#c8c8c8;"></div>
<span class="t" style="left:4.33px;top:569.00px;font-size:10.2px;color:#444;-webkit-text-stroke:0.15px #444;">23</span>
<div class="b" style="left:0px;top:580.45px;width:19px;height:1px;background:#c8c8c8;"></div>
<span class="t" style="left:4.33px;top:585.00px;font-size:10.2px;color:#444;-webkit-text-stroke:0.15px #444;">24</span>
<div class="b" style="left:0px;top:596.08px;width:19px;height:1px;background:#c8c8c8;"></div>
<span class="t" style="left:4.33px;top:600.00px;font-size:10.2px;color:#444;-webkit-text-stroke:0.15px #444;">25</span>
<div class="b" style="left:0px;top:611.7px;width:19px;height:1px;background:#c8c8c8;"></div>
<span class="t" style="left:4.33px;top:616.00px;font-size:10.2px;color:#444;-webkit-text-stroke:0.15px #444;">26</span>
<div class="b" style="left:0px;top:627.33px;width:19px;height:1px;background:#c8c8c8;"></div>
<span class="t" style="left:4.33px;top:632.00px;font-size:10.2px;color:#444;-webkit-text-stroke:0.15px #444;">27</span>
<div class="b" style="left:0px;top:642.95px;width:19px;height:1px;background:#c8c8c8;"></div>
<span class="t" style="left:4.33px;top:647.00px;font-size:10.2px;color:#444;-webkit-text-stroke:0.15px #444;">28</span>
<div class="b" style="left:0px;top:658.58px;width:19px;height:1px;background:#c8c8c8;"></div>
<span class="t" style="left:4.33px;top:663.00px;font-size:10.2px;color:#444;-webkit-text-stroke:0.15px #444;">29</span>
<div class="b" style="left:0px;top:674.2px;width:19px;height:1px;background:#c8c8c8;"></div>
<span class="t" style="left:4.33px;top:679.00px;font-size:10.2px;color:#444;-webkit-text-stroke:0.15px #444;">30</span>
<div class="b" style="left:0px;top:689.83px;width:19px;height:1px;background:#c8c8c8;"></div>
<span class="t" style="left:4.33px;top:694.00px;font-size:10.2px;color:#444;-webkit-text-stroke:0.15px #444;">31</span>
<div class="b" style="left:0px;top:705.45px;width:19px;height:1px;background:#c8c8c8;"></div>
<span class="t" style="left:4.33px;top:710.00px;font-size:10.2px;color:#444;-webkit-text-stroke:0.15px #444;">32</span>
<div class="b" style="left:0px;top:721.08px;width:19px;height:1px;background:#c8c8c8;"></div>
<span class="t" style="left:4.33px;top:725.00px;font-size:10.2px;color:#444;-webkit-text-stroke:0.15px #444;">33</span>
<div class="b" style="left:0px;top:736.7px;width:19px;height:1px;background:#c8c8c8;"></div>
<span class="t" style="left:4.33px;top:741.00px;font-size:10.2px;color:#444;-webkit-text-stroke:0.15px #444;">34</span>
<div class="b" style="left:0px;top:752.33px;width:19px;height:1px;background:#c8c8c8;"></div>
<span class="t" style="left:4.33px;top:757.00px;font-size:10.2px;color:#444;-webkit-text-stroke:0.15px #444;">35</span>
<div class="b" style="left:0px;top:767.95px;width:19px;height:1px;background:#c8c8c8;"></div>
<span class="t" style="left:4.33px;top:772.00px;font-size:10.2px;color:#444;-webkit-text-stroke:0.15px #444;">36</span>
<svg class="b" style="left:18px;top:172px;" width="74" height="67" viewBox="0 0 74 67"><rect x="2.150" y="1.750" width="69.700" height="63" fill="none" stroke="#217346" stroke-width="1.500"/></svg>
<div class="b" style="left:1485px;top:158.6px;width:15px;height:616px;background:#e6e6e6;"></div>
<div class="b" style="left:1484.5px;top:173.5px;width:1px;height:601px;background:#b4b4b4;"></div>
<div class="b" style="left:1487px;top:172px;width:12px;height:591.5px;background:#dadada;"></div>
<div class="b" style="left:1487.5px;top:160.3px;width:11.5px;height:11px;background:#fff;border:1px solid #c0c0c0;box-sizing:border-box;"></div>
<svg class="b" style="left:1490.2px;top:163.8px;" width="6.5" height="4" viewBox="0 0 6.5 4"><path d="M.3 3.600l2.900-3.200 2.900 3.200z" fill="#555"/></svg>
<div class="b" style="left:1487.5px;top:172.3px;width:11.5px;height:238px;background:#fff;border:1px solid #c0c0c0;box-sizing:border-box;"></div>
<div class="b" style="left:1487.5px;top:763.3px;width:11.5px;height:11px;background:#fff;border:1px solid #c0c0c0;box-sizing:border-box;"></div>
<svg class="b" style="left:1490.2px;top:767px;" width="6.5" height="4" viewBox="0 0 6.5 4"><path d="M.3 .4h5.800l-2.900 3.200z" fill="#555"/></svg>
<div class="b" style="left:47px;top:195.5px;width:467.7px;height:422.2px;background:#f3f3f3;"></div>
<span class="t" style="left:65.00px;top:215.00px;font-size:25.2px;color:#333;-webkit-text-stroke:0.650px #f3f3f3;transform:scaleX(0.9887);transform-origin:0 0;">Mit</span>
<span class="t" style="left:104.80px;top:215.00px;font-size:25.2px;color:#333;-webkit-text-stroke:0.650px #f3f3f3;transform:scaleX(0.9475);transform-origin:0 0;">Tabellen</span>
<span class="t" style="left:200.80px;top:215.00px;font-size:25.2px;color:#333;-webkit-text-stroke:0.650px #f3f3f3;transform:scaleX(0.9743);transform-origin:0 0;">wird</span>
<span class="t" style="left:252.80px;top:215.00px;font-size:25.2px;color:#333;-webkit-text-stroke:0.650px #f3f3f3;transform:scaleX(0.8726);transform-origin:0 0;">vieles</span>
<span class="t" style="left:316.00px;top:215.00px;font-size:25.2px;color:#333;-webkit-text-stroke:0.650px #f3f3f3;transform:scaleX(0.9187);transform-origin:0 0;">einfacher</span>
<div class="b" style="left:66.9px;top:246.5px;width:428.4px;height:2.2px;background:#217346;"></div>
<span class="t" style="left:66.40px;top:259.00px;font-size:11.1px;color:#3c3c3c;letter-spacing:0.176px;">Mit einer Tabelle haben Sie Zugriff auf besondere Funktionen und Annehmlichkeiten.</span>
<span class="t" style="left:66.40px;top:275.00px;font-size:11.1px;color:#3c3c3c;letter-spacing:-0.034px;">So erstellen Sie eine Tabelle:</span>
<div class="b" style="left:65.5px;top:292.6px;width:30.8px;height:30.8px;background:#217346;border-radius:50%;"></div>
<span class="t" style="left:76.45px;top:302.00px;font-size:16px;color:#fff;font-weight:bold;">1</span>
<span class="t" style="left:107.10px;top:303.00px;font-size:11.1px;color:#3c3c3c;letter-spacing:0.074px;">Klicken Sie innerhalb der Daten auf der rechten Seite, und klicken Sie dann</span>
<span class="t" style="left:107.10px;top:319.00px;font-size:11.1px;color:#3c3c3c;letter-spacing:0.144px;">auf <b>Einfügen &gt; Tabelle</b> &gt; <b>OK</b>.</span>
<div class="b" style="left:65.5px;top:331.4px;width:30.8px;height:30.8px;background:#217346;border-radius:50%;"></div>
<span class="t" style="left:76.45px;top:341.00px;font-size:16px;color:#fff;font-weight:bold;">2</span>
<span class="t" style="left:107.10px;top:342.00px;font-size:11.1px;color:#3c3c3c;letter-spacing:0.077px;">Jetzt haben Sie eine Tabelle, das ist eine Sammlung von Zellen mit</span>
<span class="t" style="left:107.10px;top:358.00px;font-size:11.1px;color:#3c3c3c;letter-spacing:0.049px;">besonderen Features. Für Neueinsteiger: Eine Tabelle bietet Ihnen</span>
<span class="t" style="left:107.10px;top:374.00px;font-size:11.1px;color:#3c3c3c;letter-spacing:0.056px;">gebänderte Zeilen für bessere Lesbarkeit.</span>
<div class="b" style="left:65.5px;top:385.1px;width:30.8px;height:30.8px;background:#217346;border-radius:50%;"></div>
<span class="t" style="left:76.45px;top:394.00px;font-size:16px;color:#fff;font-weight:bold;">3</span>
<span class="t" style="left:107.10px;top:396.00px;font-size:11.1px;color:#3c3c3c;letter-spacing:0.026px;">Ferner können Sie einfach neue Zeilen erstellen. Geben Sie in der leeren</span>
<span class="t" style="left:107.10px;top:411.00px;font-size:11.1px;color:#3c3c3c;letter-spacing:-0.098px;">Zelle unter <b>Fleischwaren</b> Text ein, und drücken Sie die EINGABETASTE. Es</span>
<span class="t" style="left:107.10px;top:427.00px;font-size:11.1px;color:#3c3c3c;letter-spacing:0.139px;">wird eine neue Zeile für die Tabelle angezeigt.</span>
<div class="b" style="left:65.5px;top:437.4px;width:30.8px;height:30.8px;background:#217346;border-radius:50%;"></div>
<span class="t" style="left:76.45px;top:447.00px;font-size:16px;color:#fff;font-weight:bold;">4</span>
<span class="t" style="left:107.10px;top:448.00px;font-size:11.1px;color:#3c3c3c;letter-spacing:0.053px;">Und genauso einfach können Sie Spalten erstellen: Klicken Sie in der</span>
<span class="t" style="left:107.10px;top:463.00px;font-size:11.1px;color:#3c3c3c;letter-spacing:0.151px;">unteren rechten Ecke der Tabelle auf den Ziehpunkt</span>
<span class="t" style="left:107.10px;top:479.00px;font-size:11.1px;color:#3c3c3c;letter-spacing:0.057px;">und ziehen Sie ihn um zwei Spalten nach rechts.</span>
<svg class="b" style="left:372px;top:467.4px;" width="5.5" height="5.5" viewBox="0 0 5.5 5.5"><path d="M5.200 .2v5h-5v-1.600h3.400v-3.400z" fill="#2f5db5"/><path d="M5.200 .2v5h-5z" fill="#2f5db5" opacity=".55"/></svg>
<span class="t" style="left:380.80px;top:463.00px;font-size:11.1px;color:#3c3c3c;letter-spacing:0.088px;">zur Größenänderung</span>
<div class="b" style="left:65.5px;top:488.6px;width:30.8px;height:30.8px;background:#217346;border-radius:50%;"></div>
<span class="t" style="left:76.45px;top:498.00px;font-size:16px;color:#fff;font-weight:bold;">5</span>
<span class="t" style="left:107.10px;top:499.00px;font-size:11.1px;color:#3c3c3c;letter-spacing:0.132px;">Beachten Sie, wie die beiden Spalten erstellt und formatiert werden und</span>
<span class="t" style="left:107.10px;top:514.00px;font-size:11.1px;color:#3c3c3c;letter-spacing:0.099px;">wie der Text &quot;Jan.&quot; und &quot;Feb.&quot; automatisch für Sie eingesetzt wird.</span>
<div class="b" style="left:66.4px;top:538.8px;width:428.9px;height:2px;background:#217346;"></div>
<div class="b" style="left:66.3px;top:560.9px;width:255px;height:29.6px;background:#d9d9d9;border:1px solid #8fc0a6;box-sizing:border-box;"></div>
<svg class="b" style="left:180.8px;top:588.6px;" width="26" height="18.5" viewBox="0 0 26 18.5"><path d="M7.900 0v6h-6.300l11.500 11.400 11.500-11.400h-5.900v-6" fill="#d9d9d9" stroke="#8fc0a6" stroke-width="1"/></svg>
<div class="b" style="left:189.2px;top:588.5px;width:10.3px;height:2.3px;background:#d9d9d9;"></div>
<span class="t" style="left:74.40px;top:570.00px;font-size:12.2px;color:#2b8c5c;letter-spacing:0.094px;">Tiefer einsteigen und mehr Details erfahren</span>
<div class="b" style="left:373.9px;top:560.8px;width:105.2px;height:29.9px;background:#fff;border:1.300px solid #2b8c5c;box-sizing:border-box;"></div>
<svg class="b" style="left:478.5px;top:564px;" width="19" height="24" viewBox="0 0 19 24"><path d="M0 6.400h9.700v-4.200l7.500 9.400-7.500 9.500v-4.700h-9.700" fill="#fff" stroke="#2b8c5c" stroke-width="1.200"/></svg>
<div class="b" style="left:477.6px;top:571.1px;width:1.8px;height:8.7px;background:#fff;"></div>
<span class="t" style="left:382.70px;top:570.00px;font-size:12.2px;color:#2b8c5c;letter-spacing:0.013px;">Nächster Schritt</span>
<div class="b" style="left:52px;top:643.1px;width:467px;height:131.4px;background:#f3f3f3;"></div>
<span class="t" style="left:69.80px;top:661.00px;font-size:25.2px;color:#333;-webkit-text-stroke:0.650px #f3f3f3;transform:scaleX(0.8383);transform-origin:0 0;">Berechnete</span>
<span class="t" style="left:185.60px;top:661.00px;font-size:25.2px;color:#333;-webkit-text-stroke:0.650px #f3f3f3;transform:scaleX(0.8029);transform-origin:0 0;">Spalten</span>
<span class="t" style="left:262.00px;top:661.00px;font-size:25.2px;color:#333;-webkit-text-stroke:0.650px #f3f3f3;transform:scaleX(0.8057);transform-origin:0 0;">in</span>
<span class="t" style="left:284.90px;top:661.00px;font-size:25.2px;color:#333;-webkit-text-stroke:0.650px #f3f3f3;transform:scaleX(0.8633);transform-origin:0 0;">Tabellen</span>
<div class="b" style="left:70.9px;top:693.2px;width:428.5px;height:2px;background:#217346;"></div>
<span class="t" style="left:70.90px;top:707.00px;font-size:11.1px;color:#3c3c3c;letter-spacing:0.112px;">Ein Beispiel für eine Annehmlichkeit, die Tabellen für Sie bereithalten: <b>berechnete</b></span>
<span class="t" style="left:70.90px;top:722.00px;font-size:11.1px;color:#3c3c3c;letter-spacing:0.102px;"><b>Spalten</b>. Sie geben eine Formel ein Mal ein, und sie wird automatisch nach unten</span>
<span class="t" style="left:70.90px;top:738.00px;font-size:11.1px;color:#3c3c3c;letter-spacing:0.137px;">ausgefüllt. Und so funktioniert es:</span>
<div class="b" style="left:70.1px;top:755.7px;width:30.8px;height:30.8px;background:#217346;border-radius:50%;"></div>
<span class="t" style="left:81.05px;top:765.00px;font-size:16px;color:#fff;font-weight:bold;">1</span>
<span class="t" style="left:111.20px;top:767.00px;font-size:11.1px;color:#3c3c3c;letter-spacing:-0.001px;">Wählen Sie die Zelle unter <b>Ergebnis</b> aus</span>
<span class="t" style="left:545.00px;top:288.00px;font-size:10.2px;color:#1c1c1c;letter-spacing:0.602px;-webkit-text-stroke:0.15px #1c1c1c;">Abteilung</span>
<span class="t" style="left:637.80px;top:288.00px;font-size:10.2px;color:#1c1c1c;letter-spacing:0.284px;-webkit-text-stroke:0.15px #1c1c1c;">Kategorie</span>
<span class="t" style="left:702.60px;top:288.00px;font-size:10.2px;color:#1c1c1c;letter-spacing:0.420px;-webkit-text-stroke:0.15px #1c1c1c;">Okt</span>
<span class="t" style="left:762.00px;top:288.00px;font-size:10.2px;color:#1c1c1c;letter-spacing:0.538px;-webkit-text-stroke:0.15px #1c1c1c;">Nov</span>
<span class="t" style="left:811.10px;top:288.00px;font-size:10.2px;color:#1c1c1c;letter-spacing:-0.113px;-webkit-text-stroke:0.15px #1c1c1c;">Dez</span>
<span class="t" style="left:545.00px;top:303.00px;font-size:10.2px;color:#1c1c1c;letter-spacing:0.215px;-webkit-text-stroke:0.15px #1c1c1c;">Obst und Gemüse</span>
<span class="t" style="left:637.80px;top:303.00px;font-size:10.2px;color:#1c1c1c;letter-spacing:0.097px;-webkit-text-stroke:0.15px #1c1c1c;">Gemüse</span>
<span class="t" style="left:730.40px;top:303.00px;font-size:10.2px;color:#1c1c1c;letter-spacing:-0.236px;-webkit-text-stroke:0.15px #1c1c1c;">30000</span>
<span class="t" style="left:779.50px;top:303.00px;font-size:10.2px;color:#1c1c1c;letter-spacing:-0.236px;-webkit-text-stroke:0.15px #1c1c1c;">80000</span>
<span class="t" style="left:828.90px;top:303.00px;font-size:10.2px;color:#1c1c1c;letter-spacing:-0.236px;-webkit-text-stroke:0.15px #1c1c1c;">30000</span>
<span class="t" style="left:545.00px;top:319.00px;font-size:10.2px;color:#1c1c1c;letter-spacing:0.215px;-webkit-text-stroke:0.15px #1c1c1c;">Obst und Gemüse</span>
<span class="t" style="left:637.80px;top:319.00px;font-size:10.2px;color:#1c1c1c;letter-spacing:0.295px;-webkit-text-stroke:0.15px #1c1c1c;">Obst</span>
<span class="t" style="left:730.40px;top:319.00px;font-size:10.2px;color:#1c1c1c;letter-spacing:-0.236px;-webkit-text-stroke:0.15px #1c1c1c;">10000</span>
<span class="t" style="left:779.50px;top:319.00px;font-size:10.2px;color:#1c1c1c;letter-spacing:-0.236px;-webkit-text-stroke:0.15px #1c1c1c;">30000</span>
<span class="t" style="left:828.90px;top:319.00px;font-size:10.2px;color:#1c1c1c;letter-spacing:-0.236px;-webkit-text-stroke:0.15px #1c1c1c;">40000</span>
<span class="t" style="left:545.00px;top:335.00px;font-size:10.2px;color:#1c1c1c;letter-spacing:0.074px;-webkit-text-stroke:0.15px #1c1c1c;">Backwaren</span>
<span class="t" style="left:637.80px;top:335.00px;font-size:10.2px;color:#1c1c1c;letter-spacing:0.485px;-webkit-text-stroke:0.15px #1c1c1c;">Brote</span>
<span class="t" style="left:730.40px;top:335.00px;font-size:10.2px;color:#1c1c1c;letter-spacing:-0.236px;-webkit-text-stroke:0.15px #1c1c1c;">30000</span>
<span class="t" style="left:779.50px;top:335.00px;font-size:10.2px;color:#1c1c1c;letter-spacing:-0.236px;-webkit-text-stroke:0.15px #1c1c1c;">15000</span>
<span class="t" style="left:828.90px;top:335.00px;font-size:10.2px;color:#1c1c1c;letter-spacing:-0.236px;-webkit-text-stroke:0.15px #1c1c1c;">20000</span>
<span class="t" style="left:545.00px;top:350.00px;font-size:10.2px;color:#1c1c1c;letter-spacing:0.074px;-webkit-text-stroke:0.15px #1c1c1c;">Backwaren</span>
<span class="t" style="left:637.80px;top:350.00px;font-size:10.2px;color:#1c1c1c;letter-spacing:0.157px;-webkit-text-stroke:0.15px #1c1c1c;">Desserts</span>
<span class="t" style="left:730.40px;top:350.00px;font-size:10.2px;color:#1c1c1c;letter-spacing:-0.236px;-webkit-text-stroke:0.15px #1c1c1c;">25000</span>
<span class="t" style="left:779.50px;top:350.00px;font-size:10.2px;color:#1c1c1c;letter-spacing:-0.236px;-webkit-text-stroke:0.15px #1c1c1c;">80000</span>
<span class="t" style="left:823.42px;top:350.00px;font-size:10.2px;color:#1c1c1c;letter-spacing:-0.224px;-webkit-text-stroke:0.15px #1c1c1c;">120000</span>
<span class="t" style="left:545.00px;top:366.00px;font-size:10.2px;color:#1c1c1c;letter-spacing:0.398px;-webkit-text-stroke:0.15px #1c1c1c;">Feinkost</span>
<span class="t" style="left:637.80px;top:366.00px;font-size:10.2px;color:#1c1c1c;letter-spacing:0.245px;-webkit-text-stroke:0.15px #1c1c1c;">Sandwich</span>
<span class="t" style="left:730.40px;top:366.00px;font-size:10.2px;color:#1c1c1c;letter-spacing:-0.236px;-webkit-text-stroke:0.15px #1c1c1c;">80000</span>
<span class="t" style="left:779.50px;top:366.00px;font-size:10.2px;color:#1c1c1c;letter-spacing:-0.236px;-webkit-text-stroke:0.15px #1c1c1c;">40000</span>
<span class="t" style="left:828.90px;top:366.00px;font-size:10.2px;color:#1c1c1c;letter-spacing:-0.236px;-webkit-text-stroke:0.15px #1c1c1c;">20000</span>
<span class="t" style="left:545.00px;top:382.00px;font-size:10.2px;color:#1c1c1c;letter-spacing:0.398px;-webkit-text-stroke:0.15px #1c1c1c;">Feinkost</span>
<span class="t" style="left:637.80px;top:382.00px;font-size:10.2px;color:#1c1c1c;letter-spacing:0.122px;-webkit-text-stroke:0.15px #1c1c1c;">Salate</span>
<span class="t" style="left:730.40px;top:382.00px;font-size:10.2px;color:#1c1c1c;letter-spacing:-0.236px;-webkit-text-stroke:0.15px #1c1c1c;">90000</span>
<span class="t" style="left:779.50px;top:382.00px;font-size:10.2px;color:#1c1c1c;letter-spacing:-0.236px;-webkit-text-stroke:0.15px #1c1c1c;">35000</span>
<span class="t" style="left:828.90px;top:382.00px;font-size:10.2px;color:#1c1c1c;letter-spacing:-0.236px;-webkit-text-stroke:0.15px #1c1c1c;">25000</span>
<span class="t" style="left:545.00px;top:397.00px;font-size:10.2px;color:#1c1c1c;letter-spacing:0.334px;-webkit-text-stroke:0.15px #1c1c1c;">Fleischwaren</span>
<span class="t" style="left:637.80px;top:397.00px;font-size:10.2px;color:#1c1c1c;letter-spacing:0.386px;-webkit-text-stroke:0.15px #1c1c1c;">Rindfleisch</span>
<span class="t" style="left:730.40px;top:397.00px;font-size:10.2px;color:#1c1c1c;letter-spacing:-0.236px;-webkit-text-stroke:0.15px #1c1c1c;">90000</span>
<span class="t" style="left:774.02px;top:397.00px;font-size:10.2px;color:#1c1c1c;letter-spacing:-0.074px;-webkit-text-stroke:0.15px #1c1c1c;">110000</span>
<span class="t" style="left:823.42px;top:397.00px;font-size:10.2px;color:#1c1c1c;letter-spacing:-0.224px;-webkit-text-stroke:0.15px #1c1c1c;">200000</span>
<span class="t" style="left:545.00px;top:413.00px;font-size:10.2px;color:#1c1c1c;letter-spacing:0.334px;-webkit-text-stroke:0.15px #1c1c1c;">Fleischwaren</span>
<span class="t" style="left:637.80px;top:413.00px;font-size:10.2px;color:#1c1c1c;letter-spacing:0.414px;-webkit-text-stroke:0.15px #1c1c1c;">Huhn</span>
<span class="t" style="left:730.40px;top:413.00px;font-size:10.2px;color:#1c1c1c;letter-spacing:-0.236px;-webkit-text-stroke:0.15px #1c1c1c;">75000</span>
<span class="t" style="left:779.50px;top:413.00px;font-size:10.2px;color:#1c1c1c;letter-spacing:-0.236px;-webkit-text-stroke:0.15px #1c1c1c;">82000</span>
<span class="t" style="left:823.42px;top:413.00px;font-size:10.2px;color:#1c1c1c;letter-spacing:-0.224px;-webkit-text-stroke:0.15px #1c1c1c;">150000</span>
<svg class="b" style="left:671px;top:469px;" width="28" height="31" viewBox="0 0 28 31"><ellipse cx="14.100" cy="11" rx="10.400" ry="7.900" fill="none" stroke="#f2ae7b" stroke-width="4.400"/><ellipse cx="14.100" cy="11" rx="12.300" ry="9.400" fill="none" stroke="#f2ae7b" stroke-width="1.200" stroke-dasharray="2 1.100"/><path d="M6.500 20.300l6.600 1.700-5.400 8.100-1.700-3.200-4.700.8zM21.700 20.300l-6.600 1.700 5.400 8.100 1.700-3.200 4.700.8z" fill="#f2ae7b"/></svg>
<span class="t" style="left:704.20px;top:471.00px;font-size:12px;color:#f4a968;font-weight:bold;letter-spacing:-0.261px;">BONUSAUFGABE</span>
<span class="t" style="left:704.20px;top:488.00px;font-size:10.2px;color:#3a3a3a;letter-spacing:0.092px;-webkit-text-stroke:0.15px #3a3a3a;">Versuchen Sie, die Formatvorlage der Tabelle zu</span>
<span class="t" style="left:704.20px;top:502.00px;font-size:10.2px;color:#3a3a3a;letter-spacing:0.118px;-webkit-text-stroke:0.15px #3a3a3a;">ändern. Klicken Sie zuerst in die Tabelle, dann wird</span>
<span class="t" style="left:704.20px;top:516.00px;font-size:10.2px;color:#3a3a3a;letter-spacing:0.060px;-webkit-text-stroke:0.15px #3a3a3a;">am oberen Rand von Excel die Registerkarte</span>
<span class="t" style="left:704.20px;top:530.00px;font-size:10.2px;color:#3a3a3a;letter-spacing:-0.026px;-webkit-text-stroke:0.15px #3a3a3a;"><b>Tabellentools Entwurf</b> angezeigt. Klicken Sie auf</span>
<span class="t" style="left:704.20px;top:544.00px;font-size:10.2px;color:#3a3a3a;letter-spacing:0.082px;-webkit-text-stroke:0.15px #3a3a3a;">diese Registerkarte, und wählen Sie dann eine</span>
<span class="t" style="left:704.20px;top:558.00px;font-size:10.2px;color:#3a3a3a;letter-spacing:0.129px;-webkit-text-stroke:0.15px #3a3a3a;">Formatvorlage aus, die Ihnen gefällt.</span>
<div class="b" style="left:543px;top:721.2px;width:375px;height:15.8px;background:#329965;"></div>
<div class="b" style="left:543px;top:737px;width:375px;height:15.6px;background:#f0f0f0;"></div>
<div class="b" style="left:543px;top:768px;width:375px;height:6.5px;background:#f0f0f0;"></div>
<span class="t" style="left:545.70px;top:726.00px;font-size:10.2px;color:#fff;letter-spacing:0.564px;-webkit-text-stroke:0.15px #fff;">Abteilung</span>
<div class="b" style="left:622.1px;top:723px;width:12.6px;height:12.5px;background:#fbfbfb;border:1px solid #bcbcbc;box-sizing:border-box;"></div>
<svg class="b" style="left:625.1px;top:727.8px;" width="7" height="4.5" viewBox="0 0 7 4.5"><path d="M.3 .5h6.200l-3.100 3.300z" fill="#555"/></svg>
<span class="t" style="left:637.50px;top:726.00px;font-size:10.2px;color:#fff;letter-spacing:0.384px;-webkit-text-stroke:0.15px #fff;">Kategorie</span>
<div class="b" style="left:687.1px;top:723px;width:12.6px;height:12.5px;background:#fbfbfb;border:1px solid #bcbcbc;box-sizing:border-box;"></div>
<svg class="b" style="left:690.1px;top:727.8px;" width="7" height="4.5" viewBox="0 0 7 4.5"><path d="M.3 .5h6.200l-3.100 3.300z" fill="#555"/></svg>
<span class="t" style="left:702.40px;top:726.00px;font-size:10.2px;color:#fff;letter-spacing:0.720px;-webkit-text-stroke:0.15px #fff;">Okt</span>
<div class="b" style="left:745.7px;top:723px;width:12.6px;height:12.5px;background:#fbfbfb;border:1px solid #bcbcbc;box-sizing:border-box;"></div>
<svg class="b" style="left:748.7px;top:727.8px;" width="7" height="4.5" viewBox="0 0 7 4.5"><path d="M.3 .5h6.200l-3.100 3.300z" fill="#555"/></svg>
<span class="t" style="left:762.00px;top:726.00px;font-size:10.2px;color:#fff;letter-spacing:0.337px;-webkit-text-stroke:0.15px #fff;">Nov</span>
<div class="b" style="left:795.5px;top:723px;width:12.6px;height:12.5px;background:#fbfbfb;border:1px solid #bcbcbc;box-sizing:border-box;"></div>
<svg class="b" style="left:798.5px;top:727.8px;" width="7" height="4.5" viewBox="0 0 7 4.5"><path d="M.3 .5h6.200l-3.100 3.300z" fill="#555"/></svg>
<span class="t" style="left:811.50px;top:726.00px;font-size:10.2px;color:#fff;letter-spacing:-0.462px;-webkit-text-stroke:0.15px #fff;">Dez</span>
<div class="b" style="left:844.8px;top:723px;width:12.6px;height:12.5px;background:#fbfbfb;border:1px solid #bcbcbc;box-sizing:border-box;"></div>
<svg class="b" style="left:847.8px;top:727.8px;" width="7" height="4.5" viewBox="0 0 7 4.5"><path d="M.3 .5h6.200l-3.100 3.300z" fill="#555"/></svg>
<span class="t" style="left:860.00px;top:726.00px;font-size:10.2px;color:#fff;letter-spacing:0.254px;-webkit-text-stroke:0.15px #fff;">Ergebnis</span>
<div class="b" style="left:903.8px;top:723px;width:12.6px;height:12.5px;background:#fbfbfb;border:1px solid #bcbcbc;box-sizing:border-box;"></div>
<svg class="b" style="left:906.8px;top:727.8px;" width="7" height="4.5" viewBox="0 0 7 4.5"><path d="M.3 .5h6.200l-3.100 3.300z" fill="#555"/></svg>
<span class="t" style="left:545.70px;top:741.00px;font-size:10.2px;color:#1c1c1c;letter-spacing:0.215px;-webkit-text-stroke:0.15px #1c1c1c;">Obst und Gemüse</span>
<span class="t" style="left:637.50px;top:741.00px;font-size:10.2px;color:#1c1c1c;letter-spacing:0.097px;-webkit-text-stroke:0.15px #1c1c1c;">Gemüse</span>
<span class="t" style="left:719.70px;top:741.00px;font-size:10.2px;color:#1c1c1c;letter-spacing:-0.165px;-webkit-text-stroke:0.15px #1c1c1c;">30.000 €</span>
<span class="t" style="left:768.90px;top:741.00px;font-size:10.2px;color:#1c1c1c;letter-spacing:-0.165px;-webkit-text-stroke:0.15px #1c1c1c;">80.000 €</span>
<span class="t" style="left:818.50px;top:741.00px;font-size:10.2px;color:#1c1c1c;letter-spacing:-0.165px;-webkit-text-stroke:0.15px #1c1c1c;">30.000 €</span>
<span class="t" style="left:545.70px;top:757.00px;font-size:10.2px;color:#1c1c1c;letter-spacing:0.215px;-webkit-text-stroke:0.15px #1c1c1c;">Obst und Gemüse</span>
<span class="t" style="left:637.50px;top:757.00px;font-size:10.2px;color:#1c1c1c;letter-spacing:0.295px;-webkit-text-stroke:0.15px #1c1c1c;">Obst</span>
<span class="t" style="left:719.70px;top:757.00px;font-size:10.2px;color:#1c1c1c;letter-spacing:-0.165px;-webkit-text-stroke:0.15px #1c1c1c;">10.000 €</span>
<span class="t" style="left:768.90px;top:757.00px;font-size:10.2px;color:#1c1c1c;letter-spacing:-0.165px;-webkit-text-stroke:0.15px #1c1c1c;">30.000 €</span>
<span class="t" style="left:818.50px;top:757.00px;font-size:10.2px;color:#1c1c1c;letter-spacing:-0.165px;-webkit-text-stroke:0.15px #1c1c1c;">40.000 €</span>
<span class="t" style="left:545.70px;top:772.00px;font-size:10.2px;color:#1c1c1c;letter-spacing:0.074px;-webkit-text-stroke:0.15px #1c1c1c;">Backwaren</span>
<span class="t" style="left:637.50px;top:772.00px;font-size:10.2px;color:#1c1c1c;letter-spacing:0.485px;-webkit-text-stroke:0.15px #1c1c1c;">Brote</span>
<span class="t" style="left:719.70px;top:772.00px;font-size:10.2px;color:#1c1c1c;letter-spacing:-0.165px;-webkit-text-stroke:0.15px #1c1c1c;">30.000 €</span>
<span class="t" style="left:768.90px;top:772.00px;font-size:10.2px;color:#1c1c1c;letter-spacing:-0.165px;-webkit-text-stroke:0.15px #1c1c1c;">15.000 €</span>
<span class="t" style="left:818.50px;top:772.00px;font-size:10.2px;color:#1c1c1c;letter-spacing:-0.165px;-webkit-text-stroke:0.15px #1c1c1c;">20.000 €</span>
<div class="b" style="left:0px;top:774.3px;width:1500px;height:23px;background:#e6e6e6;"></div>
<div class="b" style="left:0px;top:774px;width:1485px;height:1px;background:#c0c0c0;"></div>
<div class="b" style="left:0px;top:796px;width:1500px;height:1px;background:#d2d2d2;"></div>
<svg class="b" style="left:20px;top:781.5px;" width="6" height="7.5" viewBox="0 0 6 7.5"><path d="M5.200 .6l-4.400 3.100 4.400 3.100z" fill="#c0c0c0"/></svg>
<svg class="b" style="left:42.5px;top:781.5px;" width="6" height="7.5" viewBox="0 0 6 7.5"><path d="M.8 .6l4.400 3.100-4.400 3.100z" fill="#c0c0c0"/></svg>
<span class="t" style="left:88.50px;top:781.00px;font-size:10.2px;color:#444;letter-spacing:-0.154px;-webkit-text-stroke:0.15px #444;">Start</span>
<span class="t" style="left:131.40px;top:781.00px;font-size:10.2px;color:#444;letter-spacing:0.005px;-webkit-text-stroke:0.15px #444;">1. Addieren</span>
<span class="t" style="left:207.20px;top:781.00px;font-size:10.2px;color:#444;letter-spacing:-0.208px;-webkit-text-stroke:0.15px #444;">2. Ausfüllen</span>
<span class="t" style="left:281.80px;top:781.00px;font-size:10.2px;color:#444;letter-spacing:-0.071px;-webkit-text-stroke:0.15px #444;">3. Teilen</span>
<span class="t" style="left:342.70px;top:781.00px;font-size:10.2px;color:#444;letter-spacing:0.002px;-webkit-text-stroke:0.15px #444;">4. Transponieren</span>
<span class="t" style="left:444.20px;top:781.00px;font-size:10.2px;color:#444;letter-spacing:-0.010px;-webkit-text-stroke:0.15px #444;">5. Sortieren und Filtern</span>
<span class="t" style="left:646.00px;top:781.00px;font-size:10.2px;color:#444;letter-spacing:0.091px;-webkit-text-stroke:0.15px #444;">7. Dropdownlisten</span>
<span class="t" style="left:753.20px;top:781.00px;font-size:10.2px;color:#444;letter-spacing:-0.146px;-webkit-text-stroke:0.15px #444;">8. Analysieren</span>
<span class="t" style="left:839.40px;top:781.00px;font-size:10.2px;color:#444;letter-spacing:-0.035px;-webkit-text-stroke:0.15px #444;">9. Diagramme</span>
<span class="t" style="left:927.50px;top:781.00px;font-size:10.2px;color:#444;letter-spacing:-0.142px;-webkit-text-stroke:0.15px #444;">10. PivotTables</span>
<span class="t" style="left:1020.70px;top:781.00px;font-size:10.2px;color:#444;letter-spacing:0.078px;-webkit-text-stroke:0.15px #444;">Weitere Informationen</span>
<div class="b" style="left:77.9px;top:778.5px;width:1px;height:14.5px;background:#ababab;"></div>
<div class="b" style="left:119.7px;top:778.5px;width:1px;height:14.5px;background:#ababab;"></div>
<div class="b" style="left:193.6px;top:778.5px;width:1px;height:14.5px;background:#ababab;"></div>
<div class="b" style="left:270.5px;top:778.5px;width:1px;height:14.5px;background:#ababab;"></div>
<div class="b" style="left:330.6px;top:778.5px;width:1px;height:14.5px;background:#ababab;"></div>
<div class="b" style="left:430.6px;top:778.5px;width:1px;height:14.5px;background:#ababab;"></div>
<div class="b" style="left:741.7px;top:778.5px;width:1px;height:14.5px;background:#ababab;"></div>
<div class="b" style="left:828.2px;top:778.5px;width:1px;height:14.5px;background:#ababab;"></div>
<div class="b" style="left:915.1px;top:778.5px;width:1px;height:14.5px;background:#ababab;"></div>
<div class="b" style="left:1006.8px;top:778.5px;width:1px;height:14.5px;background:#ababab;"></div>
<div class="b" style="left:1135.5px;top:778.5px;width:1px;height:14.5px;background:#ababab;"></div>
<div class="b" style="left:561.3px;top:774px;width:72.7px;height:19.8px;background:#fff;"></div>
<div class="b" style="left:561px;top:774.5px;width:1px;height:18px;background:#c6c6c6;"></div>
<div class="b" style="left:633.5px;top:774.5px;width:1px;height:18px;background:#c6c6c6;"></div>
<div class="b" style="left:561.3px;top:792.3px;width:72.7px;height:1.8px;background:#217346;"></div>
<span class="t" style="left:570.80px;top:781.00px;font-size:10.2px;color:#217346;font-weight:bold;letter-spacing:0.069px;-webkit-text-stroke:0.15px #217346;">6. Tabellen</span>
<svg class="b" style="left:1161.8px;top:778.8px;" width="13" height="13" viewBox="0 0 13 13"><circle cx="6.500" cy="6.500" r="5.700" fill="none" stroke="#6a6a6a" stroke-width="1.100"/><path d="M6.500 3.400v6.200M3.400 6.500h6.200" stroke="#555" stroke-width="1.300"/></svg>
<div class="b" style="left:1262.9px;top:781.6px;width:1px;height:1px;background:#999;"></div>
<div class="b" style="left:1262.9px;top:784.0px;width:1px;height:1px;background:#999;"></div>
<div class="b" style="left:1262.9px;top:786.4px;width:1px;height:1px;background:#999;"></div>
<div class="b" style="left:1262.9px;top:788.8000000000001px;width:1px;height:1px;background:#999;"></div>
<div class="b" style="left:1276.7px;top:780px;width:10.6px;height:11px;background:#fff;border:1px solid #c0c0c0;box-sizing:border-box;"></div>
<svg class="b" style="left:1279.8px;top:782.3px;" width="4.5" height="7" viewBox="0 0 4.5 7"><path d="M3.900 .4l-3.400 3 3.400 3z" fill="#555"/></svg>
<div class="b" style="left:1288.3px;top:780px;width:174.4px;height:11px;background:#fff;border:1px solid #c0c0c0;box-sizing:border-box;"></div>
<div class="b" style="left:1463px;top:780px;width:11px;height:11px;background:#dadada;"></div>
<div class="b" style="left:1475px;top:780px;width:11px;height:11px;background:#fff;border:1px solid #c0c0c0;box-sizing:border-box;"></div>
<svg class="b" style="left:1478.8px;top:782.3px;" width="4.5" height="7" viewBox="0 0 4.5 7"><path d="M.5 .4l3.400 3-3.400 3z" fill="#555"/></svg>
<div class="b" style="left:0px;top:797px;width:1500px;height:15px;background:#f2f2f2;"></div>
<div class="b" style="left:0px;top:811.6px;width:1500px;height:1.4px;background:#fff;"></div>
<div class="b" style="left:0px;top:813px;width:1500px;height:2px;background:#0a0a0a;"></div>
<span class="t" style="left:5.80px;top:801.00px;font-size:9.1px;color:#3b3b3b;letter-spacing:-0.313px;-webkit-text-stroke:0.18px #3b3b3b;">Bereit</span>
<div class="b" style="left:1276px;top:797px;width:29px;height:16px;background:#c8c8c8;"></div>
<svg class="b" style="left:1285px;top:799.3px;" width="10.5" height="10.5" viewBox="0 0 10.5 10.5"><path d="M.5 .5h9.500v9.500h-9.500zM3.700 .5v9.500M6.800 .5v9.500M.5 3.700h9.500M.5 6.800h9.500" fill="none" stroke="#555" stroke-width=".9"/></svg>
<svg class="b" style="left:1315px;top:799.3px;" width="11.5" height="10.5" viewBox="0 0 11.5 10.5"><rect x=".5" y=".5" width="10.400" height="9.500" fill="none" stroke="#666" stroke-width=".9"/><rect x="3.200" y="2.400" width="5" height="5.700" fill="none" stroke="#666" stroke-width=".8"/><path d="M4.600 4.200h2.200M4.600 6.200h2.200" stroke="#666" stroke-width=".7"/></svg>
<svg class="b" style="left:1344px;top:799.3px;" width="11.5" height="10.5" viewBox="0 0 11.5 10.5"><rect x=".5" y=".5" width="10.400" height="9.500" fill="none" stroke="#666" stroke-width=".9"/><path d="M3.400 .5v5.600h4.600v-5.600" fill="none" stroke="#666" stroke-width=".9"/></svg>
<div class="b" style="left:1368.3px;top:804.5px;width:5px;height:1.2px;background:#555;"></div>
<div class="b" style="left:1376.7px;top:804.6px;width:77.3px;height:1px;background:#a0a0a0;"></div>
<div class="b" style="left:1414px;top:800px;width:3.7px;height:9.3px;background:#666;"></div>
<div class="b" style="left:1457.3px;top:804.5px;width:5.6px;height:1.2px;background:#555;"></div>
<div class="b" style="left:1459.5px;top:802.3px;width:1.2px;height:5.6px;background:#555;"></div>
<span class="t" style="left:1472.70px;top:801.00px;font-size:9.1px;color:#3b3b3b;letter-spacing:-0.874px;-webkit-text-stroke:0.18px #3b3b3b;">100 %</span>
</body></html>
